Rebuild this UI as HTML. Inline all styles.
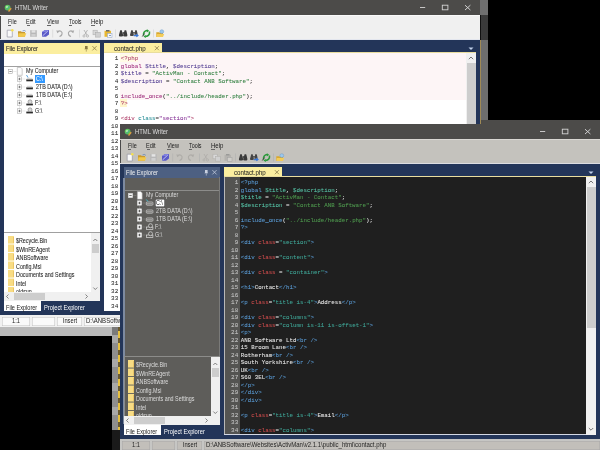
<!DOCTYPE html><html><head><meta charset="utf-8"><style>
html,body{margin:0;padding:0;}
body{width:600px;height:450px;background:#000;position:relative;overflow:hidden;}
.w{position:absolute;width:488px;height:336px;overflow:hidden;will-change:transform;}
.w div{position:absolute;}
.t{white-space:nowrap;}
u{text-decoration-thickness:0.45px;text-underline-offset:0.8px;}
</style></head><body>
<div class="w" style="left:0;top:0;"><div style="left:480px;top:0px;width:8px;height:15px;background:#6f6f6f;"></div><div style="left:480px;top:15px;width:8px;height:25px;background:#3a3a3a;"></div><div style="left:480px;top:15px;width:1px;height:25px;background:#111;"></div><div style="left:481px;top:40px;width:7px;height:296px;background:#6e6e6e;"></div><div style="left:480px;top:40px;width:1px;height:296px;background:#a08a55;"></div><div style="left:0px;top:0px;width:480px;height:14.5px;background:#4c4b49;"></div><div class="t" style="left:15.3px;top:1.0999999999999996px;line-height:13.0px;font-size:6.5px;color:#dedede;font-family:'Liberation Sans',sans-serif;transform:scaleX(0.9048) ;transform-origin:0 50%;">HTML Writer</div><svg style="position:absolute;left:4px;top:3.5px;" width="10" height="9" viewBox="0 0 10 9"><circle cx="3.6" cy="3.6" r="2.9" fill="#5bc45b"/><circle cx="3" cy="3" r="1.3" fill="#a8e8a0"/><path d="M2.2 5.6 L5.5 2.2" stroke="#3a8ac0" stroke-width="0.7"/><path d="M4.5 7.5 L7.2 4.2" stroke="#e0a040" stroke-width="1.4"/></svg><svg style="position:absolute;left:415px;top:0px;" width="60" height="15" viewBox="0 0 60 15"><path d="M5 7.5 H10.2" stroke="#d4d4d4" stroke-width="0.9"/><rect x="27.3" y="5.2" width="5.6" height="4.6" fill="none" stroke="#d4d4d4" stroke-width="0.9"/><path d="M50 5.2 L55.4 10 M55.4 5.2 L50 10" stroke="#d4d4d4" stroke-width="0.95"/></svg><div style="left:0px;top:14.5px;width:480px;height:25.5px;background:#f0f0f0;"></div><div class="t" style="left:7.8px;top:15.0px;line-height:13.0px;font-size:6.5px;color:#1a1a1a;font-family:'Liberation Sans',sans-serif;transform:scaleX(0.8396) ;transform-origin:0 50%;">File</div><div style="left:8.1px;top:24.6px;width:3.0px;height:0.5px;background:#666;"></div><div class="t" style="left:26.2px;top:15.0px;line-height:13.0px;font-size:6.5px;color:#1a1a1a;font-family:'Liberation Sans',sans-serif;transform:scaleX(0.857) ;transform-origin:0 50%;">Edit</div><div style="left:26.5px;top:24.6px;width:3.2px;height:0.5px;background:#666;"></div><div class="t" style="left:46.5px;top:15.0px;line-height:13.0px;font-size:6.5px;color:#1a1a1a;font-family:'Liberation Sans',sans-serif;transform:scaleX(0.8587) ;transform-origin:0 50%;">View</div><div style="left:46.8px;top:24.6px;width:3.8px;height:0.5px;background:#666;"></div><div class="t" style="left:68.5px;top:15.0px;line-height:13.0px;font-size:6.5px;color:#1a1a1a;font-family:'Liberation Sans',sans-serif;transform:scaleX(0.8233) ;transform-origin:0 50%;">Tools</div><div style="left:68.8px;top:24.6px;width:3.4px;height:0.5px;background:#666;"></div><div class="t" style="left:91px;top:15.0px;line-height:13.0px;font-size:6.5px;color:#1a1a1a;font-family:'Liberation Sans',sans-serif;transform:scaleX(0.927) ;transform-origin:0 50%;">Help</div><div style="left:91.3px;top:24.6px;width:4.0px;height:0.5px;background:#666;"></div><div style="left:0px;top:14.5px;width:0.8px;height:25.5px;background:#4a4a4a;"></div><div style="left:0px;top:14.5px;width:480px;height:1.0px;background:#fafafa;"></div><div style="left:0px;top:38.8px;width:480px;height:1.0px;background:#e3e6ee;"></div><svg style="position:absolute;left:0px;top:0px;" width="170" height="40" viewBox="0 0 170 40"><path d="M7.2 30.2 H11 L12.3 31.5 V37 H7.2 Z" fill="#fafafa" stroke="#8a8a9a" stroke-width="0.6"/><circle cx="12.3" cy="30.3" r="1.3" fill="#f5e050"/><path d="M18 31.2 H21 L21.8 32 H25 V36.7 H18 Z" fill="#c89a30"/><path d="M18.6 33.2 H26.3 L25 36.7 H18 Z" fill="#f2c84a"/><path d="M22.5 31 Q24.5 29.8 25.8 31.3" stroke="#4070b0" stroke-width="0.6" fill="none"/><rect x="30.2" y="30.2" width="6.6" height="6.6" fill="#b8b8b8"/><rect x="31.6" y="30.2" width="3.8" height="2.4" fill="#e4e4e4"/><rect x="31.4" y="34" width="4.2" height="2.8" fill="#d0d0d0"/><path d="M42 32 L45 30 H49 V34.5 L46 36.8 H42 Z" fill="#5a5ac8"/><path d="M42.5 36 L48 30.8" stroke="#d8d8f8" stroke-width="0.8"/><path d="M45 30 H49 L46 32 H42 Z" fill="#8080e0"/><rect x="52.5" y="29.5" width="0.6" height="8" fill="#d0d0d0"/><rect x="79" y="29.5" width="0.6" height="8" fill="#d0d0d0"/><rect x="115.3" y="29.5" width="0.6" height="8" fill="#d0d0d0"/><rect x="153" y="29.5" width="0.6" height="8" fill="#d0d0d0"/><path d="M57.5 31.5 Q60.5 30 62 32.5 Q62.5 35.5 59.5 36.5" stroke="#a8a8a8" stroke-width="1.1" fill="none"/><path d="M56.3 30.3 L57.3 33.2 L59.5 31.5 Z" fill="#a8a8a8"/><path d="M73 31.5 Q70 30 68.5 32.5 Q68 35.5 71 36.5" stroke="#a8a8a8" stroke-width="1.1" fill="none"/><path d="M74.2 30.3 L73.2 33.2 L71 31.5 Z" fill="#a8a8a8"/><path d="M84 30 L87 35 M87.5 30 L84.5 35" stroke="#a8a8a8" stroke-width="0.8"/><circle cx="84" cy="36" r="1.1" fill="none" stroke="#a8a8a8" stroke-width="0.7"/><circle cx="87.5" cy="36" r="1.1" fill="none" stroke="#a8a8a8" stroke-width="0.7"/><rect x="93" y="30.2" width="4.2" height="4.6" fill="#d8d8d8" stroke="#a8a8a8" stroke-width="0.5"/><rect x="95.5" y="32.3" width="4.8" height="4.8" fill="#d0d0d0" stroke="#a8a8a8" stroke-width="0.5"/><rect x="104.5" y="30.8" width="6.5" height="6" fill="#e8b830"/><rect x="106" y="30" width="3.5" height="1.5" fill="#6a6a6a"/><rect x="107.5" y="33.5" width="4.5" height="3.8" fill="#f8f8f8" stroke="#8aa0c8" stroke-width="0.5"/><path d="M109 35.5 H111" stroke="#3060b0" stroke-width="0.6"/><path d="M120.2 30.2 h1.6 l0.6 2.5 l0.8 2.6 q0 1.2 -1.6 1.2 h-1.6 q-1.2 0 -1.1 -1.2 Z" fill="#3a3a3a"/><path d="M124.6 30.2 h1.6 l0.7 2.6 l0.5 2.5 q0 1.2 -1.1 1.2 h-1.6 q-1.6 0 -1.6 -1.2 l0.8 -2.6 Z" fill="#3a3a3a"/><rect x="122.5" y="32.2" width="1.8" height="1.6" fill="#3a3a3a"/><path d="M131.2 30.2 h1.5 l0.5 2.4 l0.7 2.4 q0 1.1 -1.4 1.1 h-1.5 q-1.1 0 -1 -1.1 Z" fill="#444"/><path d="M135.2 30.2 h1.5 l0.6 2.4 l0.4 2.2 h-3.4 l0.6 -2.2 Z" fill="#444"/><rect x="133.2" y="32" width="1.6" height="1.5" fill="#444"/><path d="M133.8 35.6 H137.6 M136.4 34.3 L138 35.6 L136.4 36.9" stroke="#3a78d8" stroke-width="1.1" fill="none"/><path d="M143.5 35.5 Q143 31 147.5 30.6" stroke="#2a9a3a" stroke-width="1.5" fill="none"/><path d="M149.5 31.5 Q150 36 145.5 36.6" stroke="#2a9a3a" stroke-width="1.5" fill="none"/><path d="M146.8 29.2 L149.2 30.8 L146.8 32.4 Z" fill="#2a9a3a"/><path d="M145.8 35 L143.4 36.6 L145.8 38 Z" fill="#2a9a3a"/><path d="M142.3 36.5 L144.6 33.5" stroke="#3a3a3a" stroke-width="0.9"/><path d="M156.3 32.3 H159.3 L160 33 H163 V37 H156.3 Z" fill="#d8a830"/><path d="M156.8 34 H164.2 L163 37 H156.3 Z" fill="#f4cc58"/><circle cx="161.8" cy="31.6" r="1.9" fill="#9cc8ec" stroke="#5a90c8" stroke-width="0.4"/></svg><div style="left:0px;top:40px;width:480px;height:275px;background:#233559;"></div><div style="left:3.5px;top:43px;width:96.0px;height:10.6px;background:#fbee9f;"></div><div class="t" style="left:6px;top:42.1px;line-height:13.0px;font-size:6.5px;color:#2a2a2a;font-family:'Liberation Sans',sans-serif;-webkit-text-stroke:0.12px #2a2a2a;transform:scaleX(0.8769) ;transform-origin:0 50%;">File Explorer</div><svg style="position:absolute;left:80px;top:43px;" width="20" height="10" viewBox="0 0 20 10"><path d="M5 3 H7.6 V5.5 L8.3 6.3 H4.3 L5 5.5 Z" fill="#8a7a40"/><path d="M6.3 6.3 V8.6" stroke="#8a7a40" stroke-width="0.6"/><path d="M12.4 3.1 L16.6 7.4 M16.6 3.1 L12.4 7.4" stroke="#8a7a40" stroke-width="0.75"/></svg><div style="left:3.5px;top:53.6px;width:96.0px;height:246.9px;background:#ffffff;"></div><div style="left:3.5px;top:65.5px;width:96.0px;height:0.8px;background:#a0a0a0;"></div><svg style="position:absolute;left:0px;top:0px;" width="50" height="120" viewBox="0 0 50 120"><rect x="8.3" y="69.3" width="4.4" height="4.4" fill="#ffffff" stroke="#9a9a9a" stroke-width="0.5"/><path d="M9.3 71.5 H11.7" stroke="#4a4a4a" stroke-width="0.6"/><path d="M12.7 71.5 H16.5" stroke="#a8a8a8" stroke-width="0.4" stroke-dasharray="0.6 0.6"/><path d="M17.3 67.5 H20.8 L22.2 68.9 V75.3 H17.3 Z" fill="#fcfcfc" stroke="#9a9a9a" stroke-width="0.5"/><path d="M19.5 76 V111" stroke="#a8a8a8" stroke-width="0.4" stroke-dasharray="0.6 0.6"/><rect x="17.3" y="76.8" width="4.4" height="4.4" fill="#ffffff" stroke="#9a9a9a" stroke-width="0.5"/><path d="M18.3 79 H20.7 M19.5 77.8 V80.2" stroke="#4a4a4a" stroke-width="0.6"/><path d="M21.7 79 H25.5" stroke="#a8a8a8" stroke-width="0.4" stroke-dasharray="0.6 0.6"/><rect x="26.3" y="79.3" width="6.6" height="2" fill="#2a2a2a"/><rect x="26.8" y="77.8" width="5.6" height="1.5" fill="#d8d8d8"/><path d="M26.5 75 L28 77.5" stroke="#2a8ad8" stroke-width="0.8"/><rect x="17.3" y="84.8" width="4.4" height="4.4" fill="#ffffff" stroke="#9a9a9a" stroke-width="0.5"/><path d="M18.3 87 H20.7 M19.5 85.8 V88.2" stroke="#4a4a4a" stroke-width="0.6"/><path d="M21.7 87 H25.5" stroke="#a8a8a8" stroke-width="0.4" stroke-dasharray="0.6 0.6"/><rect x="26.3" y="87.3" width="6.6" height="2" fill="#2a2a2a"/><rect x="26.8" y="85.8" width="5.6" height="1.5" fill="#d8d8d8"/><rect x="17.3" y="92.8" width="4.4" height="4.4" fill="#ffffff" stroke="#9a9a9a" stroke-width="0.5"/><path d="M18.3 95 H20.7 M19.5 93.8 V96.2" stroke="#4a4a4a" stroke-width="0.6"/><path d="M21.7 95 H25.5" stroke="#a8a8a8" stroke-width="0.4" stroke-dasharray="0.6 0.6"/><rect x="26.3" y="95.3" width="6.6" height="2" fill="#2a2a2a"/><rect x="26.8" y="93.8" width="5.6" height="1.5" fill="#d8d8d8"/><rect x="17.3" y="100.8" width="4.4" height="4.4" fill="#ffffff" stroke="#9a9a9a" stroke-width="0.5"/><path d="M18.3 103 H20.7 M19.5 101.8 V104.2" stroke="#4a4a4a" stroke-width="0.6"/><path d="M21.7 103 H25.5" stroke="#a8a8a8" stroke-width="0.4" stroke-dasharray="0.6 0.6"/><rect x="26.3" y="103.6" width="6.6" height="1.8" fill="#2a2a2a"/><circle cx="30" cy="101.8" r="2" fill="#d8d8d8" stroke="#6a6a6a" stroke-width="0.5"/><rect x="17.3" y="108.8" width="4.4" height="4.4" fill="#ffffff" stroke="#9a9a9a" stroke-width="0.5"/><path d="M18.3 111 H20.7 M19.5 109.8 V112.2" stroke="#4a4a4a" stroke-width="0.6"/><path d="M21.7 111 H25.5" stroke="#a8a8a8" stroke-width="0.4" stroke-dasharray="0.6 0.6"/><rect x="26.3" y="111.6" width="6.6" height="1.8" fill="#2a2a2a"/><circle cx="30" cy="109.8" r="2" fill="#d8d8d8" stroke="#6a6a6a" stroke-width="0.5"/></svg><div style="left:34.5px;top:75.2px;width:10.0px;height:8.0px;background:#3399ff;"></div><div class="t" style="left:26px;top:64.89999999999999px;line-height:12.8px;font-size:6.4px;color:#1e1e1e;font-family:'Liberation Sans',sans-serif;-webkit-text-stroke:0.06px #1e1e1e;transform:scaleX(0.84) ;transform-origin:0 50%;">My Computer</div><div class="t" style="left:35.7px;top:72.8px;line-height:12.8px;font-size:6.4px;color:#ffffff;font-family:'Liberation Sans',sans-serif;-webkit-text-stroke:0.06px #ffffff;transform:scaleX(0.84) ;transform-origin:0 50%;">C:\</div><div class="t" style="left:36px;top:80.8px;line-height:12.8px;font-size:6.4px;color:#1e1e1e;font-family:'Liberation Sans',sans-serif;-webkit-text-stroke:0.06px #1e1e1e;transform:scaleX(0.84) ;transform-origin:0 50%;">2TB DATA (D:\)</div><div class="t" style="left:36px;top:88.8px;line-height:12.8px;font-size:6.4px;color:#1e1e1e;font-family:'Liberation Sans',sans-serif;-webkit-text-stroke:0.06px #1e1e1e;transform:scaleX(0.84) ;transform-origin:0 50%;">1TB DATA (E:\)</div><div class="t" style="left:35px;top:96.8px;line-height:12.8px;font-size:6.4px;color:#1e1e1e;font-family:'Liberation Sans',sans-serif;-webkit-text-stroke:0.06px #1e1e1e;transform:scaleX(0.84) ;transform-origin:0 50%;">F:\</div><div class="t" style="left:35px;top:104.8px;line-height:12.8px;font-size:6.4px;color:#1e1e1e;font-family:'Liberation Sans',sans-serif;-webkit-text-stroke:0.06px #1e1e1e;transform:scaleX(0.84) ;transform-origin:0 50%;">G:\</div><div style="left:3.5px;top:232px;width:96.0px;height:1.3px;background:#a0a0a0;"></div><svg style="position:absolute;left:8px;top:236.4px;" width="6" height="58" viewBox="0 0 6 58"><rect x="0" y="0.0" width="6" height="7.6" fill="#f8dc84"/><rect x="5.2" y="1.0" width="0.8" height="6" fill="#e8c060"/><rect x="0" y="8.5" width="6" height="7.6" fill="#f8dc84"/><rect x="5.2" y="9.5" width="0.8" height="6" fill="#e8c060"/><rect x="0" y="17.0" width="6" height="7.6" fill="#f8dc84"/><rect x="5.2" y="18.0" width="0.8" height="6" fill="#e8c060"/><rect x="0" y="25.5" width="6" height="7.6" fill="#f8dc84"/><rect x="5.2" y="26.5" width="0.8" height="6" fill="#e8c060"/><rect x="0" y="34.0" width="6" height="7.6" fill="#f8dc84"/><rect x="5.2" y="35.0" width="0.8" height="6" fill="#e8c060"/><rect x="0" y="42.5" width="6" height="7.6" fill="#f8dc84"/><rect x="5.2" y="43.5" width="0.8" height="6" fill="#e8c060"/><rect x="0" y="51.0" width="6" height="7.6" fill="#f8dc84"/><rect x="5.2" y="52.0" width="0.8" height="6" fill="#e8c060"/></svg><div class="t" style="left:16.2px;top:235.0px;line-height:12.8px;font-size:6.4px;color:#1e1e1e;font-family:'Liberation Sans',sans-serif;-webkit-text-stroke:0.06px #1e1e1e;transform:scaleX(0.84) ;transform-origin:0 50%;">$Recycle.Bin</div><div class="t" style="left:16.2px;top:243.5px;line-height:12.8px;font-size:6.4px;color:#1e1e1e;font-family:'Liberation Sans',sans-serif;-webkit-text-stroke:0.06px #1e1e1e;transform:scaleX(0.84) ;transform-origin:0 50%;">$WinREAgent</div><div class="t" style="left:16.2px;top:252.00000000000003px;line-height:12.8px;font-size:6.4px;color:#1e1e1e;font-family:'Liberation Sans',sans-serif;-webkit-text-stroke:0.06px #1e1e1e;transform:scaleX(0.84) ;transform-origin:0 50%;">ANBSoftware</div><div class="t" style="left:16.2px;top:260.50000000000006px;line-height:12.8px;font-size:6.4px;color:#1e1e1e;font-family:'Liberation Sans',sans-serif;-webkit-text-stroke:0.06px #1e1e1e;transform:scaleX(0.84) ;transform-origin:0 50%;">Config.Msi</div><div class="t" style="left:16.2px;top:269.00000000000006px;line-height:12.8px;font-size:6.4px;color:#1e1e1e;font-family:'Liberation Sans',sans-serif;-webkit-text-stroke:0.06px #1e1e1e;transform:scaleX(0.84) ;transform-origin:0 50%;">Documents and Settings</div><div class="t" style="left:16.2px;top:277.50000000000006px;line-height:12.8px;font-size:6.4px;color:#1e1e1e;font-family:'Liberation Sans',sans-serif;-webkit-text-stroke:0.06px #1e1e1e;transform:scaleX(0.84) ;transform-origin:0 50%;">Intel</div><div class="t" style="left:16.2px;top:286.00000000000006px;line-height:12.8px;font-size:6.4px;color:#1e1e1e;font-family:'Liberation Sans',sans-serif;-webkit-text-stroke:0.06px #1e1e1e;transform:scaleX(0.84) ;transform-origin:0 50%;">oldsun</div><div style="left:3.5px;top:292px;width:96.0px;height:8.5px;background:#f0f0f0;"></div><div style="left:91px;top:233.3px;width:8.5px;height:58.7px;background:#f0f0f0;"></div><div style="left:91.5px;top:244px;width:7.0px;height:9px;background:#cdcdcd;"></div><svg style="position:absolute;left:91px;top:233px;" width="9" height="67" viewBox="0 0 9 67"><path d="M2.3 8 L4.3 6 L6.3 8" stroke="#555" stroke-width="0.7" fill="none"/><path d="M2.3 54.5 L4.3 56.5 L6.3 54.5" stroke="#555" stroke-width="0.7" fill="none"/></svg><svg style="position:absolute;left:0px;top:290px;" width="100" height="12" viewBox="0 0 100 12"><path d="M8.5 4.5 L6.5 6.5 L8.5 8.5" stroke="#555" stroke-width="0.7" fill="none"/><path d="M85.5 4.5 L87.5 6.5 L85.5 8.5" stroke="#555" stroke-width="0.7" fill="none"/></svg><div style="left:14px;top:293px;width:31px;height:6.5px;background:#cdcdcd;"></div><div style="left:3.5px;top:300.5px;width:37.5px;height:10.5px;background:#ffffff;"></div><div class="t" style="left:6.3px;top:300.8px;line-height:13.0px;font-size:6.5px;color:#222;font-family:'Liberation Sans',sans-serif;transform:scaleX(0.855) ;transform-origin:0 50%;">File Explorer</div><div class="t" style="left:44.2px;top:300.8px;line-height:13.0px;font-size:6.5px;color:#ffffff;font-family:'Liberation Sans',sans-serif;transform:scaleX(0.8823) ;transform-origin:0 50%;">Project Explorer</div><div style="left:103.5px;top:43px;width:58.5px;height:10px;background:#fbee9f;"></div><div class="t" style="left:113.8px;top:42.1px;line-height:13.0px;font-size:6.5px;color:#222;font-family:'Liberation Sans',sans-serif;-webkit-text-stroke:0.04px #222;transform:scaleX(0.943) ;transform-origin:0 50%;">contact.php</div><svg style="position:absolute;left:150px;top:43px;" width="12" height="10" viewBox="0 0 12 10"><path d="M4.9 3.2 L8.9 7.2 M8.9 3.2 L4.9 7.2" stroke="#7a6a40" stroke-width="0.7"/></svg><svg style="position:absolute;left:466px;top:45px;" width="10" height="7" viewBox="0 0 10 7"><path d="M2.5 2.5 H7.5 L5 5 Z" fill="#c0d0ea"/></svg><div style="left:104px;top:52.2px;width:372px;height:1.0px;background:#e9dd9e;"></div><div style="left:104px;top:53.2px;width:362px;height:257.8px;background:#ffffff;"></div><div style="left:104px;top:53.2px;width:15.5px;height:257.8px;background:#ffffff;"></div><div style="left:466px;top:53.2px;width:10px;height:257.8px;background:#f0f0f0;"></div><div style="left:466.5px;top:63px;width:9.0px;height:141px;background:#cdcdcd;"></div><svg style="position:absolute;left:466px;top:300px;" width="10" height="10" viewBox="0 0 10 10"><path d="M2.8 4 L5 6.2 L7.2 4" stroke="#555" stroke-width="0.8" fill="none"/></svg><svg style="position:absolute;left:466px;top:53px;" width="10" height="10" viewBox="0 0 10 10"><path d="M2.8 6.2 L5 4 L7.2 6.2" stroke="#555" stroke-width="0.8" fill="none"/></svg><div style="left:119.5px;top:53.2px;width:346.5px;height:46.4px;background:#fdf5f6;"></div><div style="left:119.5px;top:54px;width:18.5px;height:7.5px;background:#fffbe6;"></div><div style="left:119.5px;top:99px;width:7.5px;height:7.5px;background:#fff6cc;"></div><div class="t" style="left:118.3px;top:53.0px;line-height:12px;font-size:6px;color:#2a2a2a;font-family:'Liberation Mono',monospace;-webkit-text-stroke:0.04px #2a2a2a;transform:translateX(-100%) ;transform-origin:0 50%;">1</div><div class="t" style="left:120.8px;top:53.2px;line-height:11.6px;font-size:5.8px;color:#222;font-family:'Liberation Mono',monospace;white-space:pre;"><span style="color:#b0406a;-webkit-text-stroke:0.06px #b0406a">&lt;?php</span></div><div class="t" style="left:118.3px;top:60.5px;line-height:12px;font-size:6px;color:#2a2a2a;font-family:'Liberation Mono',monospace;-webkit-text-stroke:0.04px #2a2a2a;transform:translateX(-100%) ;transform-origin:0 50%;">2</div><div class="t" style="left:120.8px;top:60.7px;line-height:11.6px;font-size:5.8px;color:#222;font-family:'Liberation Mono',monospace;white-space:pre;"><span style="color:#a0307e;-webkit-text-stroke:0.06px #a0307e">global</span><span style="color:#222;-webkit-text-stroke:0.06px #222"> </span><span style="color:#4f3a90;-webkit-text-stroke:0.06px #4f3a90">$title</span><span style="color:#222;-webkit-text-stroke:0.06px #222">, </span><span style="color:#4f3a90;-webkit-text-stroke:0.06px #4f3a90">$description</span><span style="color:#222;-webkit-text-stroke:0.06px #222">;</span></div><div class="t" style="left:118.3px;top:68.0px;line-height:12px;font-size:6px;color:#2a2a2a;font-family:'Liberation Mono',monospace;-webkit-text-stroke:0.04px #2a2a2a;transform:translateX(-100%) ;transform-origin:0 50%;">3</div><div class="t" style="left:120.8px;top:68.2px;line-height:11.6px;font-size:5.8px;color:#222;font-family:'Liberation Mono',monospace;white-space:pre;"><span style="color:#4f3a90;-webkit-text-stroke:0.06px #4f3a90">$title</span><span style="color:#222;-webkit-text-stroke:0.06px #222"> = </span><span style="color:#2f7f3f;-webkit-text-stroke:0.06px #2f7f3f">&quot;ActivMan - Contact&quot;</span><span style="color:#222;-webkit-text-stroke:0.06px #222">;</span></div><div class="t" style="left:118.3px;top:75.5px;line-height:12px;font-size:6px;color:#2a2a2a;font-family:'Liberation Mono',monospace;-webkit-text-stroke:0.04px #2a2a2a;transform:translateX(-100%) ;transform-origin:0 50%;">4</div><div class="t" style="left:120.8px;top:75.7px;line-height:11.6px;font-size:5.8px;color:#222;font-family:'Liberation Mono',monospace;white-space:pre;"><span style="color:#4f3a90;-webkit-text-stroke:0.06px #4f3a90">$description</span><span style="color:#222;-webkit-text-stroke:0.06px #222"> = </span><span style="color:#2f7f3f;-webkit-text-stroke:0.06px #2f7f3f">&quot;Contact ANB Software&quot;</span><span style="color:#222;-webkit-text-stroke:0.06px #222">;</span></div><div class="t" style="left:118.3px;top:83.0px;line-height:12px;font-size:6px;color:#2a2a2a;font-family:'Liberation Mono',monospace;-webkit-text-stroke:0.04px #2a2a2a;transform:translateX(-100%) ;transform-origin:0 50%;">5</div><div class="t" style="left:120.8px;top:83.2px;line-height:11.6px;font-size:5.8px;color:#222;font-family:'Liberation Mono',monospace;white-space:pre;"></div><div class="t" style="left:118.3px;top:90.5px;line-height:12px;font-size:6px;color:#2a2a2a;font-family:'Liberation Mono',monospace;-webkit-text-stroke:0.04px #2a2a2a;transform:translateX(-100%) ;transform-origin:0 50%;">6</div><div class="t" style="left:120.8px;top:90.7px;line-height:11.6px;font-size:5.8px;color:#222;font-family:'Liberation Mono',monospace;white-space:pre;"><span style="color:#a0307e;-webkit-text-stroke:0.06px #a0307e">include_once</span><span style="color:#222;-webkit-text-stroke:0.06px #222">(</span><span style="color:#2f7f3f;-webkit-text-stroke:0.06px #2f7f3f">&quot;../include/header.php&quot;</span><span style="color:#222;-webkit-text-stroke:0.06px #222">);</span></div><div class="t" style="left:118.3px;top:98.0px;line-height:12px;font-size:6px;color:#2a2a2a;font-family:'Liberation Mono',monospace;-webkit-text-stroke:0.04px #2a2a2a;transform:translateX(-100%) ;transform-origin:0 50%;">7</div><div class="t" style="left:120.8px;top:98.2px;line-height:11.6px;font-size:5.8px;color:#222;font-family:'Liberation Mono',monospace;white-space:pre;"><span style="color:#b0406a;-webkit-text-stroke:0.06px #b0406a">?&gt;</span></div><div class="t" style="left:118.3px;top:105.5px;line-height:12px;font-size:6px;color:#2a2a2a;font-family:'Liberation Mono',monospace;-webkit-text-stroke:0.04px #2a2a2a;transform:translateX(-100%) ;transform-origin:0 50%;">8</div><div class="t" style="left:120.8px;top:105.7px;line-height:11.6px;font-size:5.8px;color:#222;font-family:'Liberation Mono',monospace;white-space:pre;"></div><div class="t" style="left:118.3px;top:113.0px;line-height:12px;font-size:6px;color:#2a2a2a;font-family:'Liberation Mono',monospace;-webkit-text-stroke:0.04px #2a2a2a;transform:translateX(-100%) ;transform-origin:0 50%;">9</div><div class="t" style="left:120.8px;top:113.2px;line-height:11.6px;font-size:5.8px;color:#222;font-family:'Liberation Mono',monospace;white-space:pre;"><span style="color:#b0406a;-webkit-text-stroke:0.06px #b0406a">&lt;div</span><span style="color:#222;-webkit-text-stroke:0.06px #222"> </span><span style="color:#2a9098;-webkit-text-stroke:0.06px #2a9098">class</span><span style="color:#222;-webkit-text-stroke:0.06px #222">=</span><span style="color:#8a3a9a;-webkit-text-stroke:0.06px #8a3a9a">&quot;section&quot;</span><span style="color:#b0406a;-webkit-text-stroke:0.06px #b0406a">&gt;</span></div><div class="t" style="left:118.3px;top:120.5px;line-height:12px;font-size:6px;color:#2a2a2a;font-family:'Liberation Mono',monospace;-webkit-text-stroke:0.04px #2a2a2a;transform:translateX(-100%) ;transform-origin:0 50%;">10</div><div class="t" style="left:120.8px;top:120.7px;line-height:11.6px;font-size:5.8px;color:#222;font-family:'Liberation Mono',monospace;white-space:pre;"></div><div class="t" style="left:118.3px;top:128.0px;line-height:12px;font-size:6px;color:#2a2a2a;font-family:'Liberation Mono',monospace;-webkit-text-stroke:0.04px #2a2a2a;transform:translateX(-100%) ;transform-origin:0 50%;">11</div><div class="t" style="left:120.8px;top:128.2px;line-height:11.6px;font-size:5.8px;color:#222;font-family:'Liberation Mono',monospace;white-space:pre;"><span style="color:#b0406a;-webkit-text-stroke:0.06px #b0406a">&lt;div</span><span style="color:#222;-webkit-text-stroke:0.06px #222"> </span><span style="color:#2a9098;-webkit-text-stroke:0.06px #2a9098">class</span><span style="color:#222;-webkit-text-stroke:0.06px #222">=</span><span style="color:#8a3a9a;-webkit-text-stroke:0.06px #8a3a9a">&quot;content&quot;</span><span style="color:#b0406a;-webkit-text-stroke:0.06px #b0406a">&gt;</span></div><div class="t" style="left:118.3px;top:135.5px;line-height:12px;font-size:6px;color:#2a2a2a;font-family:'Liberation Mono',monospace;-webkit-text-stroke:0.04px #2a2a2a;transform:translateX(-100%) ;transform-origin:0 50%;">12</div><div class="t" style="left:120.8px;top:135.7px;line-height:11.6px;font-size:5.8px;color:#222;font-family:'Liberation Mono',monospace;white-space:pre;"></div><div class="t" style="left:118.3px;top:143.0px;line-height:12px;font-size:6px;color:#2a2a2a;font-family:'Liberation Mono',monospace;-webkit-text-stroke:0.04px #2a2a2a;transform:translateX(-100%) ;transform-origin:0 50%;">13</div><div class="t" style="left:120.8px;top:143.2px;line-height:11.6px;font-size:5.8px;color:#222;font-family:'Liberation Mono',monospace;white-space:pre;"><span style="color:#b0406a;-webkit-text-stroke:0.06px #b0406a">&lt;div</span><span style="color:#222;-webkit-text-stroke:0.06px #222"> </span><span style="color:#2a9098;-webkit-text-stroke:0.06px #2a9098">class</span><span style="color:#222;-webkit-text-stroke:0.06px #222"> = </span><span style="color:#8a3a9a;-webkit-text-stroke:0.06px #8a3a9a">&quot;container&quot;</span><span style="color:#b0406a;-webkit-text-stroke:0.06px #b0406a">&gt;</span></div><div class="t" style="left:118.3px;top:150.5px;line-height:12px;font-size:6px;color:#2a2a2a;font-family:'Liberation Mono',monospace;-webkit-text-stroke:0.04px #2a2a2a;transform:translateX(-100%) ;transform-origin:0 50%;">14</div><div class="t" style="left:120.8px;top:150.7px;line-height:11.6px;font-size:5.8px;color:#222;font-family:'Liberation Mono',monospace;white-space:pre;"></div><div class="t" style="left:118.3px;top:158.0px;line-height:12px;font-size:6px;color:#2a2a2a;font-family:'Liberation Mono',monospace;-webkit-text-stroke:0.04px #2a2a2a;transform:translateX(-100%) ;transform-origin:0 50%;">15</div><div class="t" style="left:120.8px;top:158.2px;line-height:11.6px;font-size:5.8px;color:#222;font-family:'Liberation Mono',monospace;white-space:pre;"><span style="color:#b0406a;-webkit-text-stroke:0.06px #b0406a">&lt;h1&gt;</span><span style="color:#222;-webkit-text-stroke:0.06px #222">Contact</span><span style="color:#b0406a;-webkit-text-stroke:0.06px #b0406a">&lt;/h1&gt;</span></div><div class="t" style="left:118.3px;top:165.5px;line-height:12px;font-size:6px;color:#2a2a2a;font-family:'Liberation Mono',monospace;-webkit-text-stroke:0.04px #2a2a2a;transform:translateX(-100%) ;transform-origin:0 50%;">16</div><div class="t" style="left:120.8px;top:165.7px;line-height:11.6px;font-size:5.8px;color:#222;font-family:'Liberation Mono',monospace;white-space:pre;"></div><div class="t" style="left:118.3px;top:173.0px;line-height:12px;font-size:6px;color:#2a2a2a;font-family:'Liberation Mono',monospace;-webkit-text-stroke:0.04px #2a2a2a;transform:translateX(-100%) ;transform-origin:0 50%;">17</div><div class="t" style="left:120.8px;top:173.2px;line-height:11.6px;font-size:5.8px;color:#222;font-family:'Liberation Mono',monospace;white-space:pre;"><span style="color:#b0406a;-webkit-text-stroke:0.06px #b0406a">&lt;p</span><span style="color:#222;-webkit-text-stroke:0.06px #222"> </span><span style="color:#2a9098;-webkit-text-stroke:0.06px #2a9098">class</span><span style="color:#222;-webkit-text-stroke:0.06px #222">=</span><span style="color:#8a3a9a;-webkit-text-stroke:0.06px #8a3a9a">&quot;title is-4&quot;</span><span style="color:#b0406a;-webkit-text-stroke:0.06px #b0406a">&gt;</span><span style="color:#222;-webkit-text-stroke:0.06px #222">Address</span><span style="color:#b0406a;-webkit-text-stroke:0.06px #b0406a">&lt;/p&gt;</span></div><div class="t" style="left:118.3px;top:180.5px;line-height:12px;font-size:6px;color:#2a2a2a;font-family:'Liberation Mono',monospace;-webkit-text-stroke:0.04px #2a2a2a;transform:translateX(-100%) ;transform-origin:0 50%;">18</div><div class="t" style="left:120.8px;top:180.7px;line-height:11.6px;font-size:5.8px;color:#222;font-family:'Liberation Mono',monospace;white-space:pre;"></div><div class="t" style="left:118.3px;top:188.0px;line-height:12px;font-size:6px;color:#2a2a2a;font-family:'Liberation Mono',monospace;-webkit-text-stroke:0.04px #2a2a2a;transform:translateX(-100%) ;transform-origin:0 50%;">19</div><div class="t" style="left:120.8px;top:188.2px;line-height:11.6px;font-size:5.8px;color:#222;font-family:'Liberation Mono',monospace;white-space:pre;"><span style="color:#b0406a;-webkit-text-stroke:0.06px #b0406a">&lt;div</span><span style="color:#222;-webkit-text-stroke:0.06px #222"> </span><span style="color:#2a9098;-webkit-text-stroke:0.06px #2a9098">class</span><span style="color:#222;-webkit-text-stroke:0.06px #222">=</span><span style="color:#8a3a9a;-webkit-text-stroke:0.06px #8a3a9a">&quot;columns&quot;</span><span style="color:#b0406a;-webkit-text-stroke:0.06px #b0406a">&gt;</span></div><div class="t" style="left:118.3px;top:195.5px;line-height:12px;font-size:6px;color:#2a2a2a;font-family:'Liberation Mono',monospace;-webkit-text-stroke:0.04px #2a2a2a;transform:translateX(-100%) ;transform-origin:0 50%;">20</div><div class="t" style="left:120.8px;top:195.7px;line-height:11.6px;font-size:5.8px;color:#222;font-family:'Liberation Mono',monospace;white-space:pre;"><span style="color:#b0406a;-webkit-text-stroke:0.06px #b0406a">&lt;div</span><span style="color:#222;-webkit-text-stroke:0.06px #222"> </span><span style="color:#2a9098;-webkit-text-stroke:0.06px #2a9098">class</span><span style="color:#222;-webkit-text-stroke:0.06px #222">=</span><span style="color:#8a3a9a;-webkit-text-stroke:0.06px #8a3a9a">&quot;column is-11 is-offset-1&quot;</span><span style="color:#b0406a;-webkit-text-stroke:0.06px #b0406a">&gt;</span></div><div class="t" style="left:118.3px;top:203.0px;line-height:12px;font-size:6px;color:#2a2a2a;font-family:'Liberation Mono',monospace;-webkit-text-stroke:0.04px #2a2a2a;transform:translateX(-100%) ;transform-origin:0 50%;">21</div><div class="t" style="left:120.8px;top:203.2px;line-height:11.6px;font-size:5.8px;color:#222;font-family:'Liberation Mono',monospace;white-space:pre;"><span style="color:#b0406a;-webkit-text-stroke:0.06px #b0406a">&lt;p&gt;</span></div><div class="t" style="left:118.3px;top:210.5px;line-height:12px;font-size:6px;color:#2a2a2a;font-family:'Liberation Mono',monospace;-webkit-text-stroke:0.04px #2a2a2a;transform:translateX(-100%) ;transform-origin:0 50%;">22</div><div class="t" style="left:120.8px;top:210.7px;line-height:11.6px;font-size:5.8px;color:#222;font-family:'Liberation Mono',monospace;white-space:pre;"><span style="color:#222;-webkit-text-stroke:0.06px #222">ANB Software Ltd</span><span style="color:#b0406a;-webkit-text-stroke:0.06px #b0406a">&lt;br /&gt;</span></div><div class="t" style="left:118.3px;top:218.0px;line-height:12px;font-size:6px;color:#2a2a2a;font-family:'Liberation Mono',monospace;-webkit-text-stroke:0.04px #2a2a2a;transform:translateX(-100%) ;transform-origin:0 50%;">23</div><div class="t" style="left:120.8px;top:218.2px;line-height:11.6px;font-size:5.8px;color:#222;font-family:'Liberation Mono',monospace;white-space:pre;"><span style="color:#222;-webkit-text-stroke:0.06px #222">15 Broom Lane</span><span style="color:#b0406a;-webkit-text-stroke:0.06px #b0406a">&lt;br /&gt;</span></div><div class="t" style="left:118.3px;top:225.5px;line-height:12px;font-size:6px;color:#2a2a2a;font-family:'Liberation Mono',monospace;-webkit-text-stroke:0.04px #2a2a2a;transform:translateX(-100%) ;transform-origin:0 50%;">24</div><div class="t" style="left:120.8px;top:225.7px;line-height:11.6px;font-size:5.8px;color:#222;font-family:'Liberation Mono',monospace;white-space:pre;"><span style="color:#222;-webkit-text-stroke:0.06px #222">Rotherham</span><span style="color:#b0406a;-webkit-text-stroke:0.06px #b0406a">&lt;br /&gt;</span></div><div class="t" style="left:118.3px;top:233.0px;line-height:12px;font-size:6px;color:#2a2a2a;font-family:'Liberation Mono',monospace;-webkit-text-stroke:0.04px #2a2a2a;transform:translateX(-100%) ;transform-origin:0 50%;">25</div><div class="t" style="left:120.8px;top:233.2px;line-height:11.6px;font-size:5.8px;color:#222;font-family:'Liberation Mono',monospace;white-space:pre;"><span style="color:#222;-webkit-text-stroke:0.06px #222">South Yorkshire</span><span style="color:#b0406a;-webkit-text-stroke:0.06px #b0406a">&lt;br /&gt;</span></div><div class="t" style="left:118.3px;top:240.5px;line-height:12px;font-size:6px;color:#2a2a2a;font-family:'Liberation Mono',monospace;-webkit-text-stroke:0.04px #2a2a2a;transform:translateX(-100%) ;transform-origin:0 50%;">26</div><div class="t" style="left:120.8px;top:240.7px;line-height:11.6px;font-size:5.8px;color:#222;font-family:'Liberation Mono',monospace;white-space:pre;"><span style="color:#222;-webkit-text-stroke:0.06px #222">UK</span><span style="color:#b0406a;-webkit-text-stroke:0.06px #b0406a">&lt;br /&gt;</span></div><div class="t" style="left:118.3px;top:248.0px;line-height:12px;font-size:6px;color:#2a2a2a;font-family:'Liberation Mono',monospace;-webkit-text-stroke:0.04px #2a2a2a;transform:translateX(-100%) ;transform-origin:0 50%;">27</div><div class="t" style="left:120.8px;top:248.2px;line-height:11.6px;font-size:5.8px;color:#222;font-family:'Liberation Mono',monospace;white-space:pre;"><span style="color:#222;-webkit-text-stroke:0.06px #222">S60 3EL</span><span style="color:#b0406a;-webkit-text-stroke:0.06px #b0406a">&lt;br /&gt;</span></div><div class="t" style="left:118.3px;top:255.5px;line-height:12px;font-size:6px;color:#2a2a2a;font-family:'Liberation Mono',monospace;-webkit-text-stroke:0.04px #2a2a2a;transform:translateX(-100%) ;transform-origin:0 50%;">28</div><div class="t" style="left:120.8px;top:255.7px;line-height:11.6px;font-size:5.8px;color:#222;font-family:'Liberation Mono',monospace;white-space:pre;"><span style="color:#b0406a;-webkit-text-stroke:0.06px #b0406a">&lt;/p&gt;</span></div><div class="t" style="left:118.3px;top:263.0px;line-height:12px;font-size:6px;color:#2a2a2a;font-family:'Liberation Mono',monospace;-webkit-text-stroke:0.04px #2a2a2a;transform:translateX(-100%) ;transform-origin:0 50%;">29</div><div class="t" style="left:120.8px;top:263.2px;line-height:11.6px;font-size:5.8px;color:#222;font-family:'Liberation Mono',monospace;white-space:pre;"><span style="color:#b0406a;-webkit-text-stroke:0.06px #b0406a">&lt;/div&gt;</span></div><div class="t" style="left:118.3px;top:270.5px;line-height:12px;font-size:6px;color:#2a2a2a;font-family:'Liberation Mono',monospace;-webkit-text-stroke:0.04px #2a2a2a;transform:translateX(-100%) ;transform-origin:0 50%;">30</div><div class="t" style="left:120.8px;top:270.7px;line-height:11.6px;font-size:5.8px;color:#222;font-family:'Liberation Mono',monospace;white-space:pre;"><span style="color:#b0406a;-webkit-text-stroke:0.06px #b0406a">&lt;/div&gt;</span></div><div class="t" style="left:118.3px;top:278.0px;line-height:12px;font-size:6px;color:#2a2a2a;font-family:'Liberation Mono',monospace;-webkit-text-stroke:0.04px #2a2a2a;transform:translateX(-100%) ;transform-origin:0 50%;">31</div><div class="t" style="left:120.8px;top:278.2px;line-height:11.6px;font-size:5.8px;color:#222;font-family:'Liberation Mono',monospace;white-space:pre;"></div><div class="t" style="left:118.3px;top:285.5px;line-height:12px;font-size:6px;color:#2a2a2a;font-family:'Liberation Mono',monospace;-webkit-text-stroke:0.04px #2a2a2a;transform:translateX(-100%) ;transform-origin:0 50%;">32</div><div class="t" style="left:120.8px;top:285.7px;line-height:11.6px;font-size:5.8px;color:#222;font-family:'Liberation Mono',monospace;white-space:pre;"><span style="color:#b0406a;-webkit-text-stroke:0.06px #b0406a">&lt;p</span><span style="color:#222;-webkit-text-stroke:0.06px #222"> </span><span style="color:#2a9098;-webkit-text-stroke:0.06px #2a9098">class</span><span style="color:#222;-webkit-text-stroke:0.06px #222">=</span><span style="color:#8a3a9a;-webkit-text-stroke:0.06px #8a3a9a">&quot;title is-4&quot;</span><span style="color:#b0406a;-webkit-text-stroke:0.06px #b0406a">&gt;</span><span style="color:#222;-webkit-text-stroke:0.06px #222">Email</span><span style="color:#b0406a;-webkit-text-stroke:0.06px #b0406a">&lt;/p&gt;</span></div><div class="t" style="left:118.3px;top:293.0px;line-height:12px;font-size:6px;color:#2a2a2a;font-family:'Liberation Mono',monospace;-webkit-text-stroke:0.04px #2a2a2a;transform:translateX(-100%) ;transform-origin:0 50%;">33</div><div class="t" style="left:120.8px;top:293.2px;line-height:11.6px;font-size:5.8px;color:#222;font-family:'Liberation Mono',monospace;white-space:pre;"></div><div class="t" style="left:118.3px;top:300.5px;line-height:12px;font-size:6px;color:#2a2a2a;font-family:'Liberation Mono',monospace;-webkit-text-stroke:0.04px #2a2a2a;transform:translateX(-100%) ;transform-origin:0 50%;">34</div><div class="t" style="left:120.8px;top:300.7px;line-height:11.6px;font-size:5.8px;color:#222;font-family:'Liberation Mono',monospace;white-space:pre;"><span style="color:#b0406a;-webkit-text-stroke:0.06px #b0406a">&lt;div</span><span style="color:#222;-webkit-text-stroke:0.06px #222"> </span><span style="color:#2a9098;-webkit-text-stroke:0.06px #2a9098">class</span><span style="color:#222;-webkit-text-stroke:0.06px #222">=</span><span style="color:#8a3a9a;-webkit-text-stroke:0.06px #8a3a9a">&quot;columns&quot;</span><span style="color:#b0406a;-webkit-text-stroke:0.06px #b0406a">&gt;</span></div><div style="left:0px;top:315px;width:480px;height:12px;background:#f0f0f0;"></div><div style="left:2px;top:316.5px;width:28px;height:9.5px;background:#fafafa;box-shadow:inset 0 0 0 0.5px #c0c0c0;"></div><div class="t" style="left:16.0px;top:314.3px;line-height:13.0px;font-size:6.5px;color:#222;font-family:'Liberation Sans',sans-serif;transform:scaleX(0.88) translateX(-50%);transform-origin:0 50%;">1:1</div><div style="left:32px;top:316.5px;width:23px;height:9.5px;background:#fafafa;box-shadow:inset 0 0 0 0.5px #c0c0c0;"></div><div style="left:57px;top:316.5px;width:25px;height:9.5px;background:#fafafa;box-shadow:inset 0 0 0 0.5px #c0c0c0;"></div><div class="t" style="left:69.5px;top:314.3px;line-height:13.0px;font-size:6.5px;color:#222;font-family:'Liberation Sans',sans-serif;transform:scaleX(0.88) translateX(-50%);transform-origin:0 50%;">Insert</div><div style="left:84px;top:316.5px;width:396px;height:9.5px;background:#fafafa;box-shadow:inset 0 0 0 0.5px #c0c0c0;"></div><div class="t" style="left:85.5px;top:314.3px;line-height:13.0px;font-size:6.5px;color:#222;font-family:'Liberation Sans',sans-serif;transform:scaleX(0.93) ;transform-origin:0 50%;">D:\ANBSoftware\Websites\ActivMan\v2.1.1\public_html\contact.php</div><div style="left:0px;top:327px;width:480px;height:9px;background:#b9b9b9;"></div></div>
<div class="w" style="left:120px;top:123.5px;"><div style="left:480px;top:0px;width:8px;height:15px;background:#6f6f6f;"></div><div style="left:480px;top:15px;width:8px;height:25px;background:#3a3a3a;"></div><div style="left:480px;top:15px;width:1px;height:25px;background:#111;"></div><div style="left:481px;top:40px;width:7px;height:296px;background:#6e6e6e;"></div><div style="left:480px;top:40px;width:1px;height:296px;background:#a08a55;"></div><div style="left:0px;top:0px;width:480px;height:14.5px;background:#4c4b49;"></div><div class="t" style="left:15.3px;top:1.0999999999999996px;line-height:13.0px;font-size:6.5px;color:#dedede;font-family:'Liberation Sans',sans-serif;transform:scaleX(0.9048) ;transform-origin:0 50%;">HTML Writer</div><svg style="position:absolute;left:4px;top:3.5px;" width="10" height="9" viewBox="0 0 10 9"><circle cx="3.6" cy="3.6" r="2.9" fill="#5bc45b"/><circle cx="3" cy="3" r="1.3" fill="#a8e8a0"/><path d="M2.2 5.6 L5.5 2.2" stroke="#3a8ac0" stroke-width="0.7"/><path d="M4.5 7.5 L7.2 4.2" stroke="#e0a040" stroke-width="1.4"/></svg><svg style="position:absolute;left:415px;top:0px;" width="60" height="15" viewBox="0 0 60 15"><path d="M5 7.5 H10.2" stroke="#d4d4d4" stroke-width="0.9"/><rect x="27.3" y="5.2" width="5.6" height="4.6" fill="none" stroke="#d4d4d4" stroke-width="0.9"/><path d="M50 5.2 L55.4 10 M55.4 5.2 L50 10" stroke="#d4d4d4" stroke-width="0.95"/></svg><div style="left:0px;top:14.5px;width:480px;height:25.5px;background:#c4c2bd;"></div><div class="t" style="left:7.8px;top:15.0px;line-height:13.0px;font-size:6.5px;color:#1a1a1a;font-family:'Liberation Sans',sans-serif;transform:scaleX(0.8396) ;transform-origin:0 50%;">File</div><div style="left:8.1px;top:24.6px;width:3.0px;height:0.5px;background:#666;"></div><div class="t" style="left:26.2px;top:15.0px;line-height:13.0px;font-size:6.5px;color:#1a1a1a;font-family:'Liberation Sans',sans-serif;transform:scaleX(0.857) ;transform-origin:0 50%;">Edit</div><div style="left:26.5px;top:24.6px;width:3.2px;height:0.5px;background:#666;"></div><div class="t" style="left:46.5px;top:15.0px;line-height:13.0px;font-size:6.5px;color:#1a1a1a;font-family:'Liberation Sans',sans-serif;transform:scaleX(0.8587) ;transform-origin:0 50%;">View</div><div style="left:46.8px;top:24.6px;width:3.8px;height:0.5px;background:#666;"></div><div class="t" style="left:68.5px;top:15.0px;line-height:13.0px;font-size:6.5px;color:#1a1a1a;font-family:'Liberation Sans',sans-serif;transform:scaleX(0.8233) ;transform-origin:0 50%;">Tools</div><div style="left:68.8px;top:24.6px;width:3.4px;height:0.5px;background:#666;"></div><div class="t" style="left:91px;top:15.0px;line-height:13.0px;font-size:6.5px;color:#1a1a1a;font-family:'Liberation Sans',sans-serif;transform:scaleX(0.927) ;transform-origin:0 50%;">Help</div><div style="left:91.3px;top:24.6px;width:4.0px;height:0.5px;background:#666;"></div><div style="left:0px;top:14.5px;width:0.8px;height:25.5px;background:#4a4a4a;"></div><div style="left:0px;top:14.5px;width:480px;height:1.0px;background:#d8d6d2;"></div><div style="left:0px;top:38.8px;width:480px;height:1.0px;background:#dcdde2;"></div><svg style="position:absolute;left:0px;top:0px;" width="170" height="40" viewBox="0 0 170 40"><path d="M7.2 30.2 H11 L12.3 31.5 V37 H7.2 Z" fill="#fafafa" stroke="#8a8a9a" stroke-width="0.6"/><circle cx="12.3" cy="30.3" r="1.3" fill="#f5e050"/><path d="M18 31.2 H21 L21.8 32 H25 V36.7 H18 Z" fill="#c89a30"/><path d="M18.6 33.2 H26.3 L25 36.7 H18 Z" fill="#f2c84a"/><path d="M22.5 31 Q24.5 29.8 25.8 31.3" stroke="#4070b0" stroke-width="0.6" fill="none"/><rect x="30.2" y="30.2" width="6.6" height="6.6" fill="#b8b8b8"/><rect x="31.6" y="30.2" width="3.8" height="2.4" fill="#e4e4e4"/><rect x="31.4" y="34" width="4.2" height="2.8" fill="#d0d0d0"/><path d="M42 32 L45 30 H49 V34.5 L46 36.8 H42 Z" fill="#5a5ac8"/><path d="M42.5 36 L48 30.8" stroke="#d8d8f8" stroke-width="0.8"/><path d="M45 30 H49 L46 32 H42 Z" fill="#8080e0"/><rect x="52.5" y="29.5" width="0.6" height="8" fill="#b0b0b0"/><rect x="79" y="29.5" width="0.6" height="8" fill="#b0b0b0"/><rect x="115.3" y="29.5" width="0.6" height="8" fill="#b0b0b0"/><rect x="153" y="29.5" width="0.6" height="8" fill="#b0b0b0"/><path d="M57.5 31.5 Q60.5 30 62 32.5 Q62.5 35.5 59.5 36.5" stroke="#aeaca8" stroke-width="1.1" fill="none"/><path d="M56.3 30.3 L57.3 33.2 L59.5 31.5 Z" fill="#aeaca8"/><path d="M73 31.5 Q70 30 68.5 32.5 Q68 35.5 71 36.5" stroke="#aeaca8" stroke-width="1.1" fill="none"/><path d="M74.2 30.3 L73.2 33.2 L71 31.5 Z" fill="#aeaca8"/><path d="M84 30 L87 35 M87.5 30 L84.5 35" stroke="#aeaca8" stroke-width="0.8"/><circle cx="84" cy="36" r="1.1" fill="none" stroke="#aeaca8" stroke-width="0.7"/><circle cx="87.5" cy="36" r="1.1" fill="none" stroke="#aeaca8" stroke-width="0.7"/><rect x="93" y="30.2" width="4.2" height="4.6" fill="#d8d8d8" stroke="#aeaca8" stroke-width="0.5"/><rect x="95.5" y="32.3" width="4.8" height="4.8" fill="#d0d0d0" stroke="#aeaca8" stroke-width="0.5"/><rect x="104.5" y="30.8" width="6.5" height="6" fill="#b4b2ae"/><rect x="106" y="30" width="3.5" height="1.5" fill="#9a9a98"/><rect x="107.5" y="33.5" width="4.5" height="3.8" fill="#d0cec9" stroke="#a0a0a0" stroke-width="0.5"/><path d="M120.2 30.2 h1.6 l0.6 2.5 l0.8 2.6 q0 1.2 -1.6 1.2 h-1.6 q-1.2 0 -1.1 -1.2 Z" fill="#3a3a3a"/><path d="M124.6 30.2 h1.6 l0.7 2.6 l0.5 2.5 q0 1.2 -1.1 1.2 h-1.6 q-1.6 0 -1.6 -1.2 l0.8 -2.6 Z" fill="#3a3a3a"/><rect x="122.5" y="32.2" width="1.8" height="1.6" fill="#3a3a3a"/><path d="M131.2 30.2 h1.5 l0.5 2.4 l0.7 2.4 q0 1.1 -1.4 1.1 h-1.5 q-1.1 0 -1 -1.1 Z" fill="#444"/><path d="M135.2 30.2 h1.5 l0.6 2.4 l0.4 2.2 h-3.4 l0.6 -2.2 Z" fill="#444"/><rect x="133.2" y="32" width="1.6" height="1.5" fill="#444"/><path d="M133.8 35.6 H137.6 M136.4 34.3 L138 35.6 L136.4 36.9" stroke="#3a78d8" stroke-width="1.1" fill="none"/><path d="M143.5 35.5 Q143 31 147.5 30.6" stroke="#2a9a3a" stroke-width="1.5" fill="none"/><path d="M149.5 31.5 Q150 36 145.5 36.6" stroke="#2a9a3a" stroke-width="1.5" fill="none"/><path d="M146.8 29.2 L149.2 30.8 L146.8 32.4 Z" fill="#2a9a3a"/><path d="M145.8 35 L143.4 36.6 L145.8 38 Z" fill="#2a9a3a"/><path d="M142.3 36.5 L144.6 33.5" stroke="#3a3a3a" stroke-width="0.9"/><path d="M156.3 32.3 H159.3 L160 33 H163 V37 H156.3 Z" fill="#d8a830"/><path d="M156.8 34 H164.2 L163 37 H156.3 Z" fill="#f4cc58"/><circle cx="161.8" cy="31.6" r="1.9" fill="#9cc8ec" stroke="#5a90c8" stroke-width="0.4"/></svg><div style="left:0px;top:40px;width:480px;height:275px;background:#233559;"></div><div style="left:3.5px;top:43px;width:96.0px;height:10.6px;background:#4d6082;"></div><div class="t" style="left:6px;top:42.1px;line-height:13.0px;font-size:6.5px;color:#f0f0f0;font-family:'Liberation Sans',sans-serif;transform:scaleX(0.8769) ;transform-origin:0 50%;">File Explorer</div><svg style="position:absolute;left:80px;top:43px;" width="20" height="10" viewBox="0 0 20 10"><path d="M5 3 H7.6 V5.5 L8.3 6.3 H4.3 L5 5.5 Z" fill="#c8d0e0"/><path d="M6.3 6.3 V8.6" stroke="#c8d0e0" stroke-width="0.6"/><path d="M12.4 3.1 L16.6 7.4 M16.6 3.1 L12.4 7.4" stroke="#c8d0e0" stroke-width="0.75"/></svg><div style="left:3.5px;top:53.6px;width:96.0px;height:246.9px;background:#5e5d5a;"></div><div style="left:3.5px;top:65.5px;width:96.0px;height:0.8px;background:#8c8c8a;"></div><div style="left:98.9px;top:53px;width:0.6px;height:247.5px;background:#7a7a78;"></div><div style="left:3.3px;top:53.6px;width:1.3px;height:246.9px;background:#7d8aa0;"></div><svg style="position:absolute;left:0px;top:0px;" width="50" height="120" viewBox="0 0 50 120"><rect x="8.3" y="69.3" width="4.4" height="4.4" fill="#f4f4f4" stroke="#d8d8d8" stroke-width="0.5"/><path d="M9.3 71.5 H11.7" stroke="#222222" stroke-width="0.6"/><path d="M12.7 71.5 H16.5" stroke="#c8c8c8" stroke-width="0.4" stroke-dasharray="0.6 0.6"/><path d="M17.3 67.5 H20.8 L22.2 68.9 V75.3 H17.3 Z" fill="#fcfcfc" stroke="#9a9a9a" stroke-width="0.5"/><path d="M19.5 76 V111" stroke="#c8c8c8" stroke-width="0.4" stroke-dasharray="0.6 0.6"/><rect x="17.3" y="76.8" width="4.4" height="4.4" fill="#f4f4f4" stroke="#d8d8d8" stroke-width="0.5"/><path d="M18.3 79 H20.7 M19.5 77.8 V80.2" stroke="#222222" stroke-width="0.6"/><path d="M21.7 79 H25.5" stroke="#c8c8c8" stroke-width="0.4" stroke-dasharray="0.6 0.6"/><rect x="26.3" y="78" width="6.6" height="3.2" rx="0.8" fill="#5e5d5a" stroke="#f0f0f0" stroke-width="0.6"/><path d="M27 79.8 H32" stroke="#f0f0f0" stroke-width="0.6"/><path d="M26.3 75.5 L28 77.5" stroke="#40b8c8" stroke-width="1"/><rect x="17.3" y="84.8" width="4.4" height="4.4" fill="#f4f4f4" stroke="#d8d8d8" stroke-width="0.5"/><path d="M18.3 87 H20.7 M19.5 85.8 V88.2" stroke="#222222" stroke-width="0.6"/><path d="M21.7 87 H25.5" stroke="#c8c8c8" stroke-width="0.4" stroke-dasharray="0.6 0.6"/><rect x="26.3" y="86" width="6.6" height="3.2" rx="0.8" fill="#5e5d5a" stroke="#f0f0f0" stroke-width="0.6"/><path d="M27 87.8 H32" stroke="#f0f0f0" stroke-width="0.6"/><rect x="17.3" y="92.8" width="4.4" height="4.4" fill="#f4f4f4" stroke="#d8d8d8" stroke-width="0.5"/><path d="M18.3 95 H20.7 M19.5 93.8 V96.2" stroke="#222222" stroke-width="0.6"/><path d="M21.7 95 H25.5" stroke="#c8c8c8" stroke-width="0.4" stroke-dasharray="0.6 0.6"/><rect x="26.3" y="94" width="6.6" height="3.2" rx="0.8" fill="#5e5d5a" stroke="#f0f0f0" stroke-width="0.6"/><path d="M27 95.8 H32" stroke="#f0f0f0" stroke-width="0.6"/><rect x="17.3" y="100.8" width="4.4" height="4.4" fill="#f4f4f4" stroke="#d8d8d8" stroke-width="0.5"/><path d="M18.3 103 H20.7 M19.5 101.8 V104.2" stroke="#222222" stroke-width="0.6"/><path d="M21.7 103 H25.5" stroke="#c8c8c8" stroke-width="0.4" stroke-dasharray="0.6 0.6"/><rect x="26.3" y="103" width="6.6" height="2.4" fill="#5e5d5a" stroke="#f0f0f0" stroke-width="0.6"/><circle cx="30.5" cy="101.7" r="2" fill="#5e5d5a" stroke="#f0f0f0" stroke-width="0.6"/><rect x="17.3" y="108.8" width="4.4" height="4.4" fill="#f4f4f4" stroke="#d8d8d8" stroke-width="0.5"/><path d="M18.3 111 H20.7 M19.5 109.8 V112.2" stroke="#222222" stroke-width="0.6"/><path d="M21.7 111 H25.5" stroke="#c8c8c8" stroke-width="0.4" stroke-dasharray="0.6 0.6"/><rect x="26.3" y="111" width="6.6" height="2.4" fill="#5e5d5a" stroke="#f0f0f0" stroke-width="0.6"/><circle cx="30.5" cy="109.7" r="2" fill="#5e5d5a" stroke="#f0f0f0" stroke-width="0.6"/></svg><div style="left:34.5px;top:75.2px;width:10.0px;height:8.0px;background:#ffffff;box-shadow:inset 0 0 0 0.6px #333;"></div><div class="t" style="left:26px;top:64.89999999999999px;line-height:12.8px;font-size:6.4px;color:#dcdcdc;font-family:'Liberation Sans',sans-serif;transform:scaleX(0.84) ;transform-origin:0 50%;">My Computer</div><div class="t" style="left:35.7px;top:72.8px;line-height:12.8px;font-size:6.4px;color:#1a1a1a;font-family:'Liberation Sans',sans-serif;transform:scaleX(0.84) ;transform-origin:0 50%;">C:\</div><div class="t" style="left:36px;top:80.8px;line-height:12.8px;font-size:6.4px;color:#dcdcdc;font-family:'Liberation Sans',sans-serif;transform:scaleX(0.84) ;transform-origin:0 50%;">2TB DATA (D:\)</div><div class="t" style="left:36px;top:88.8px;line-height:12.8px;font-size:6.4px;color:#dcdcdc;font-family:'Liberation Sans',sans-serif;transform:scaleX(0.84) ;transform-origin:0 50%;">1TB DATA (E:\)</div><div class="t" style="left:35px;top:96.8px;line-height:12.8px;font-size:6.4px;color:#dcdcdc;font-family:'Liberation Sans',sans-serif;transform:scaleX(0.84) ;transform-origin:0 50%;">F:\</div><div class="t" style="left:35px;top:104.8px;line-height:12.8px;font-size:6.4px;color:#dcdcdc;font-family:'Liberation Sans',sans-serif;transform:scaleX(0.84) ;transform-origin:0 50%;">G:\</div><div style="left:3.5px;top:232px;width:96.0px;height:1.3px;background:#8c8c8a;"></div><div style="left:3.5px;top:233.3px;width:0.8px;height:58.7px;background:#8c8c8a;"></div><svg style="position:absolute;left:8px;top:236.4px;" width="6" height="58" viewBox="0 0 6 58"><rect x="0" y="0.0" width="6" height="7.6" fill="#f8dc84"/><rect x="5.2" y="1.0" width="0.8" height="6" fill="#e8c060"/><rect x="0" y="8.5" width="6" height="7.6" fill="#f8dc84"/><rect x="5.2" y="9.5" width="0.8" height="6" fill="#e8c060"/><rect x="0" y="17.0" width="6" height="7.6" fill="#f8dc84"/><rect x="5.2" y="18.0" width="0.8" height="6" fill="#e8c060"/><rect x="0" y="25.5" width="6" height="7.6" fill="#f8dc84"/><rect x="5.2" y="26.5" width="0.8" height="6" fill="#e8c060"/><rect x="0" y="34.0" width="6" height="7.6" fill="#f8dc84"/><rect x="5.2" y="35.0" width="0.8" height="6" fill="#e8c060"/><rect x="0" y="42.5" width="6" height="7.6" fill="#f8dc84"/><rect x="5.2" y="43.5" width="0.8" height="6" fill="#e8c060"/><rect x="0" y="51.0" width="6" height="7.6" fill="#f8dc84"/><rect x="5.2" y="52.0" width="0.8" height="6" fill="#e8c060"/></svg><div class="t" style="left:16.2px;top:235.0px;line-height:12.8px;font-size:6.4px;color:#dcdcdc;font-family:'Liberation Sans',sans-serif;transform:scaleX(0.84) ;transform-origin:0 50%;">$Recycle.Bin</div><div class="t" style="left:16.2px;top:243.5px;line-height:12.8px;font-size:6.4px;color:#dcdcdc;font-family:'Liberation Sans',sans-serif;transform:scaleX(0.84) ;transform-origin:0 50%;">$WinREAgent</div><div class="t" style="left:16.2px;top:252.00000000000003px;line-height:12.8px;font-size:6.4px;color:#dcdcdc;font-family:'Liberation Sans',sans-serif;transform:scaleX(0.84) ;transform-origin:0 50%;">ANBSoftware</div><div class="t" style="left:16.2px;top:260.50000000000006px;line-height:12.8px;font-size:6.4px;color:#dcdcdc;font-family:'Liberation Sans',sans-serif;transform:scaleX(0.84) ;transform-origin:0 50%;">Config.Msi</div><div class="t" style="left:16.2px;top:269.00000000000006px;line-height:12.8px;font-size:6.4px;color:#dcdcdc;font-family:'Liberation Sans',sans-serif;transform:scaleX(0.84) ;transform-origin:0 50%;">Documents and Settings</div><div class="t" style="left:16.2px;top:277.50000000000006px;line-height:12.8px;font-size:6.4px;color:#dcdcdc;font-family:'Liberation Sans',sans-serif;transform:scaleX(0.84) ;transform-origin:0 50%;">Intel</div><div class="t" style="left:16.2px;top:286.00000000000006px;line-height:12.8px;font-size:6.4px;color:#dcdcdc;font-family:'Liberation Sans',sans-serif;transform:scaleX(0.84) ;transform-origin:0 50%;">oldsun</div><div style="left:3.5px;top:292px;width:96.0px;height:8.5px;background:#f0f0f0;"></div><div style="left:91px;top:233.3px;width:8.5px;height:58.7px;background:#f0f0f0;"></div><div style="left:91.5px;top:244px;width:7.0px;height:9px;background:#cdcdcd;"></div><svg style="position:absolute;left:91px;top:233px;" width="9" height="67" viewBox="0 0 9 67"><path d="M2.3 8 L4.3 6 L6.3 8" stroke="#555" stroke-width="0.7" fill="none"/><path d="M2.3 54.5 L4.3 56.5 L6.3 54.5" stroke="#555" stroke-width="0.7" fill="none"/></svg><svg style="position:absolute;left:0px;top:290px;" width="100" height="12" viewBox="0 0 100 12"><path d="M8.5 4.5 L6.5 6.5 L8.5 8.5" stroke="#555" stroke-width="0.7" fill="none"/><path d="M85.5 4.5 L87.5 6.5 L85.5 8.5" stroke="#555" stroke-width="0.7" fill="none"/></svg><div style="left:14px;top:293px;width:31px;height:6.5px;background:#cdcdcd;"></div><div style="left:3.5px;top:300.5px;width:37.5px;height:10.5px;background:#ffffff;"></div><div class="t" style="left:6.3px;top:300.8px;line-height:13.0px;font-size:6.5px;color:#222;font-family:'Liberation Sans',sans-serif;transform:scaleX(0.855) ;transform-origin:0 50%;">File Explorer</div><div class="t" style="left:44.2px;top:300.8px;line-height:13.0px;font-size:6.5px;color:#ffffff;font-family:'Liberation Sans',sans-serif;transform:scaleX(0.8823) ;transform-origin:0 50%;">Project Explorer</div><div style="left:103.5px;top:43px;width:58.5px;height:10px;background:#fbee9f;"></div><div class="t" style="left:113.8px;top:42.1px;line-height:13.0px;font-size:6.5px;color:#222;font-family:'Liberation Sans',sans-serif;-webkit-text-stroke:0.04px #222;transform:scaleX(0.943) ;transform-origin:0 50%;">contact.php</div><svg style="position:absolute;left:150px;top:43px;" width="12" height="10" viewBox="0 0 12 10"><path d="M4.9 3.2 L8.9 7.2 M8.9 3.2 L4.9 7.2" stroke="#7a6a40" stroke-width="0.7"/></svg><svg style="position:absolute;left:466px;top:45px;" width="10" height="7" viewBox="0 0 10 7"><path d="M2.5 2.5 H7.5 L5 5 Z" fill="#c0d0ea"/></svg><div style="left:104px;top:52.2px;width:372px;height:1.0px;background:#e9dd9e;"></div><div style="left:104px;top:53.2px;width:362px;height:257.8px;background:#1f1f1f;"></div><div style="left:104px;top:53.2px;width:15.5px;height:257.8px;background:#545452;"></div><div style="left:104px;top:53.2px;width:0.9px;height:257.8px;background:#b8b8b8;"></div><div style="left:466px;top:53.2px;width:10px;height:257.8px;background:#f0f0f0;"></div><div style="left:466.5px;top:63px;width:9.0px;height:141px;background:#cdcdcd;"></div><svg style="position:absolute;left:466px;top:300px;" width="10" height="10" viewBox="0 0 10 10"><path d="M2.8 4 L5 6.2 L7.2 4" stroke="#555" stroke-width="0.8" fill="none"/></svg><svg style="position:absolute;left:466px;top:53px;" width="10" height="10" viewBox="0 0 10 10"><path d="M2.8 6.2 L5 4 L7.2 6.2" stroke="#555" stroke-width="0.8" fill="none"/></svg><div style="left:104px;top:309.8px;width:362px;height:1.6px;background:#d4d8e4;"></div><div class="t" style="left:118.3px;top:53.0px;line-height:12px;font-size:6px;color:#c8c8c8;font-family:'Liberation Mono',monospace;-webkit-text-stroke:0.04px #c8c8c8;transform:translateX(-100%) ;transform-origin:0 50%;">1</div><div class="t" style="left:120.8px;top:53.2px;line-height:11.6px;font-size:5.8px;color:#e6e6e6;font-family:'Liberation Mono',monospace;white-space:pre;"><span style="color:#5a9bd5;-webkit-text-stroke:0.06px #5a9bd5">&lt;?php</span></div><div class="t" style="left:118.3px;top:60.5px;line-height:12px;font-size:6px;color:#c8c8c8;font-family:'Liberation Mono',monospace;-webkit-text-stroke:0.04px #c8c8c8;transform:translateX(-100%) ;transform-origin:0 50%;">2</div><div class="t" style="left:120.8px;top:60.7px;line-height:11.6px;font-size:5.8px;color:#e6e6e6;font-family:'Liberation Mono',monospace;white-space:pre;"><span style="color:#5a9bd5;-webkit-text-stroke:0.06px #5a9bd5">global</span><span style="color:#e6e6e6;-webkit-text-stroke:0.06px #e6e6e6"> </span><span style="color:#56c2a6;-webkit-text-stroke:0.06px #56c2a6">$title</span><span style="color:#e6e6e6;-webkit-text-stroke:0.06px #e6e6e6">, </span><span style="color:#56c2a6;-webkit-text-stroke:0.06px #56c2a6">$description</span><span style="color:#e6e6e6;-webkit-text-stroke:0.06px #e6e6e6">;</span></div><div class="t" style="left:118.3px;top:68.0px;line-height:12px;font-size:6px;color:#c8c8c8;font-family:'Liberation Mono',monospace;-webkit-text-stroke:0.04px #c8c8c8;transform:translateX(-100%) ;transform-origin:0 50%;">3</div><div class="t" style="left:120.8px;top:68.2px;line-height:11.6px;font-size:5.8px;color:#e6e6e6;font-family:'Liberation Mono',monospace;white-space:pre;"><span style="color:#56c2a6;-webkit-text-stroke:0.06px #56c2a6">$title</span><span style="color:#e6e6e6;-webkit-text-stroke:0.06px #e6e6e6"> = </span><span style="color:#4f9a4f;-webkit-text-stroke:0.06px #4f9a4f">&quot;ActivMan - Contact&quot;</span><span style="color:#e6e6e6;-webkit-text-stroke:0.06px #e6e6e6">;</span></div><div class="t" style="left:118.3px;top:75.5px;line-height:12px;font-size:6px;color:#c8c8c8;font-family:'Liberation Mono',monospace;-webkit-text-stroke:0.04px #c8c8c8;transform:translateX(-100%) ;transform-origin:0 50%;">4</div><div class="t" style="left:120.8px;top:75.7px;line-height:11.6px;font-size:5.8px;color:#e6e6e6;font-family:'Liberation Mono',monospace;white-space:pre;"><span style="color:#56c2a6;-webkit-text-stroke:0.06px #56c2a6">$description</span><span style="color:#e6e6e6;-webkit-text-stroke:0.06px #e6e6e6"> = </span><span style="color:#4f9a4f;-webkit-text-stroke:0.06px #4f9a4f">&quot;Contact ANB Software&quot;</span><span style="color:#e6e6e6;-webkit-text-stroke:0.06px #e6e6e6">;</span></div><div class="t" style="left:118.3px;top:83.0px;line-height:12px;font-size:6px;color:#c8c8c8;font-family:'Liberation Mono',monospace;-webkit-text-stroke:0.04px #c8c8c8;transform:translateX(-100%) ;transform-origin:0 50%;">5</div><div class="t" style="left:120.8px;top:83.2px;line-height:11.6px;font-size:5.8px;color:#e6e6e6;font-family:'Liberation Mono',monospace;white-space:pre;"></div><div class="t" style="left:118.3px;top:90.5px;line-height:12px;font-size:6px;color:#c8c8c8;font-family:'Liberation Mono',monospace;-webkit-text-stroke:0.04px #c8c8c8;transform:translateX(-100%) ;transform-origin:0 50%;">6</div><div class="t" style="left:120.8px;top:90.7px;line-height:11.6px;font-size:5.8px;color:#e6e6e6;font-family:'Liberation Mono',monospace;white-space:pre;"><span style="color:#5a9bd5;-webkit-text-stroke:0.06px #5a9bd5">include_once</span><span style="color:#e6e6e6;-webkit-text-stroke:0.06px #e6e6e6">(</span><span style="color:#4f9a4f;-webkit-text-stroke:0.06px #4f9a4f">&quot;../include/header.php&quot;</span><span style="color:#e6e6e6;-webkit-text-stroke:0.06px #e6e6e6">);</span></div><div class="t" style="left:118.3px;top:98.0px;line-height:12px;font-size:6px;color:#c8c8c8;font-family:'Liberation Mono',monospace;-webkit-text-stroke:0.04px #c8c8c8;transform:translateX(-100%) ;transform-origin:0 50%;">7</div><div class="t" style="left:120.8px;top:98.2px;line-height:11.6px;font-size:5.8px;color:#e6e6e6;font-family:'Liberation Mono',monospace;white-space:pre;"><span style="color:#5a9bd5;-webkit-text-stroke:0.06px #5a9bd5">?&gt;</span></div><div class="t" style="left:118.3px;top:105.5px;line-height:12px;font-size:6px;color:#c8c8c8;font-family:'Liberation Mono',monospace;-webkit-text-stroke:0.04px #c8c8c8;transform:translateX(-100%) ;transform-origin:0 50%;">8</div><div class="t" style="left:120.8px;top:105.7px;line-height:11.6px;font-size:5.8px;color:#e6e6e6;font-family:'Liberation Mono',monospace;white-space:pre;"></div><div class="t" style="left:118.3px;top:113.0px;line-height:12px;font-size:6px;color:#c8c8c8;font-family:'Liberation Mono',monospace;-webkit-text-stroke:0.04px #c8c8c8;transform:translateX(-100%) ;transform-origin:0 50%;">9</div><div class="t" style="left:120.8px;top:113.2px;line-height:11.6px;font-size:5.8px;color:#e6e6e6;font-family:'Liberation Mono',monospace;white-space:pre;"><span style="color:#5a9bd5;-webkit-text-stroke:0.06px #5a9bd5">&lt;div</span><span style="color:#e6e6e6;-webkit-text-stroke:0.06px #e6e6e6"> </span><span style="color:#cc4c4c;-webkit-text-stroke:0.06px #cc4c4c">class</span><span style="color:#e6e6e6;-webkit-text-stroke:0.06px #e6e6e6">=</span><span style="color:#3fa596;-webkit-text-stroke:0.06px #3fa596">&quot;section&quot;</span><span style="color:#5a9bd5;-webkit-text-stroke:0.06px #5a9bd5">&gt;</span></div><div class="t" style="left:118.3px;top:120.5px;line-height:12px;font-size:6px;color:#c8c8c8;font-family:'Liberation Mono',monospace;-webkit-text-stroke:0.04px #c8c8c8;transform:translateX(-100%) ;transform-origin:0 50%;">10</div><div class="t" style="left:120.8px;top:120.7px;line-height:11.6px;font-size:5.8px;color:#e6e6e6;font-family:'Liberation Mono',monospace;white-space:pre;"></div><div class="t" style="left:118.3px;top:128.0px;line-height:12px;font-size:6px;color:#c8c8c8;font-family:'Liberation Mono',monospace;-webkit-text-stroke:0.04px #c8c8c8;transform:translateX(-100%) ;transform-origin:0 50%;">11</div><div class="t" style="left:120.8px;top:128.2px;line-height:11.6px;font-size:5.8px;color:#e6e6e6;font-family:'Liberation Mono',monospace;white-space:pre;"><span style="color:#5a9bd5;-webkit-text-stroke:0.06px #5a9bd5">&lt;div</span><span style="color:#e6e6e6;-webkit-text-stroke:0.06px #e6e6e6"> </span><span style="color:#cc4c4c;-webkit-text-stroke:0.06px #cc4c4c">class</span><span style="color:#e6e6e6;-webkit-text-stroke:0.06px #e6e6e6">=</span><span style="color:#3fa596;-webkit-text-stroke:0.06px #3fa596">&quot;content&quot;</span><span style="color:#5a9bd5;-webkit-text-stroke:0.06px #5a9bd5">&gt;</span></div><div class="t" style="left:118.3px;top:135.5px;line-height:12px;font-size:6px;color:#c8c8c8;font-family:'Liberation Mono',monospace;-webkit-text-stroke:0.04px #c8c8c8;transform:translateX(-100%) ;transform-origin:0 50%;">12</div><div class="t" style="left:120.8px;top:135.7px;line-height:11.6px;font-size:5.8px;color:#e6e6e6;font-family:'Liberation Mono',monospace;white-space:pre;"></div><div class="t" style="left:118.3px;top:143.0px;line-height:12px;font-size:6px;color:#c8c8c8;font-family:'Liberation Mono',monospace;-webkit-text-stroke:0.04px #c8c8c8;transform:translateX(-100%) ;transform-origin:0 50%;">13</div><div class="t" style="left:120.8px;top:143.2px;line-height:11.6px;font-size:5.8px;color:#e6e6e6;font-family:'Liberation Mono',monospace;white-space:pre;"><span style="color:#5a9bd5;-webkit-text-stroke:0.06px #5a9bd5">&lt;div</span><span style="color:#e6e6e6;-webkit-text-stroke:0.06px #e6e6e6"> </span><span style="color:#cc4c4c;-webkit-text-stroke:0.06px #cc4c4c">class</span><span style="color:#e6e6e6;-webkit-text-stroke:0.06px #e6e6e6"> = </span><span style="color:#3fa596;-webkit-text-stroke:0.06px #3fa596">&quot;container&quot;</span><span style="color:#5a9bd5;-webkit-text-stroke:0.06px #5a9bd5">&gt;</span></div><div class="t" style="left:118.3px;top:150.5px;line-height:12px;font-size:6px;color:#c8c8c8;font-family:'Liberation Mono',monospace;-webkit-text-stroke:0.04px #c8c8c8;transform:translateX(-100%) ;transform-origin:0 50%;">14</div><div class="t" style="left:120.8px;top:150.7px;line-height:11.6px;font-size:5.8px;color:#e6e6e6;font-family:'Liberation Mono',monospace;white-space:pre;"></div><div class="t" style="left:118.3px;top:158.0px;line-height:12px;font-size:6px;color:#c8c8c8;font-family:'Liberation Mono',monospace;-webkit-text-stroke:0.04px #c8c8c8;transform:translateX(-100%) ;transform-origin:0 50%;">15</div><div class="t" style="left:120.8px;top:158.2px;line-height:11.6px;font-size:5.8px;color:#e6e6e6;font-family:'Liberation Mono',monospace;white-space:pre;"><span style="color:#5a9bd5;-webkit-text-stroke:0.06px #5a9bd5">&lt;h1&gt;</span><span style="color:#e6e6e6;-webkit-text-stroke:0.06px #e6e6e6">Contact</span><span style="color:#5a9bd5;-webkit-text-stroke:0.06px #5a9bd5">&lt;/h1&gt;</span></div><div class="t" style="left:118.3px;top:165.5px;line-height:12px;font-size:6px;color:#c8c8c8;font-family:'Liberation Mono',monospace;-webkit-text-stroke:0.04px #c8c8c8;transform:translateX(-100%) ;transform-origin:0 50%;">16</div><div class="t" style="left:120.8px;top:165.7px;line-height:11.6px;font-size:5.8px;color:#e6e6e6;font-family:'Liberation Mono',monospace;white-space:pre;"></div><div class="t" style="left:118.3px;top:173.0px;line-height:12px;font-size:6px;color:#c8c8c8;font-family:'Liberation Mono',monospace;-webkit-text-stroke:0.04px #c8c8c8;transform:translateX(-100%) ;transform-origin:0 50%;">17</div><div class="t" style="left:120.8px;top:173.2px;line-height:11.6px;font-size:5.8px;color:#e6e6e6;font-family:'Liberation Mono',monospace;white-space:pre;"><span style="color:#5a9bd5;-webkit-text-stroke:0.06px #5a9bd5">&lt;p</span><span style="color:#e6e6e6;-webkit-text-stroke:0.06px #e6e6e6"> </span><span style="color:#cc4c4c;-webkit-text-stroke:0.06px #cc4c4c">class</span><span style="color:#e6e6e6;-webkit-text-stroke:0.06px #e6e6e6">=</span><span style="color:#3fa596;-webkit-text-stroke:0.06px #3fa596">&quot;title is-4&quot;</span><span style="color:#5a9bd5;-webkit-text-stroke:0.06px #5a9bd5">&gt;</span><span style="color:#e6e6e6;-webkit-text-stroke:0.06px #e6e6e6">Address</span><span style="color:#5a9bd5;-webkit-text-stroke:0.06px #5a9bd5">&lt;/p&gt;</span></div><div class="t" style="left:118.3px;top:180.5px;line-height:12px;font-size:6px;color:#c8c8c8;font-family:'Liberation Mono',monospace;-webkit-text-stroke:0.04px #c8c8c8;transform:translateX(-100%) ;transform-origin:0 50%;">18</div><div class="t" style="left:120.8px;top:180.7px;line-height:11.6px;font-size:5.8px;color:#e6e6e6;font-family:'Liberation Mono',monospace;white-space:pre;"></div><div class="t" style="left:118.3px;top:188.0px;line-height:12px;font-size:6px;color:#c8c8c8;font-family:'Liberation Mono',monospace;-webkit-text-stroke:0.04px #c8c8c8;transform:translateX(-100%) ;transform-origin:0 50%;">19</div><div class="t" style="left:120.8px;top:188.2px;line-height:11.6px;font-size:5.8px;color:#e6e6e6;font-family:'Liberation Mono',monospace;white-space:pre;"><span style="color:#5a9bd5;-webkit-text-stroke:0.06px #5a9bd5">&lt;div</span><span style="color:#e6e6e6;-webkit-text-stroke:0.06px #e6e6e6"> </span><span style="color:#cc4c4c;-webkit-text-stroke:0.06px #cc4c4c">class</span><span style="color:#e6e6e6;-webkit-text-stroke:0.06px #e6e6e6">=</span><span style="color:#3fa596;-webkit-text-stroke:0.06px #3fa596">&quot;columns&quot;</span><span style="color:#5a9bd5;-webkit-text-stroke:0.06px #5a9bd5">&gt;</span></div><div class="t" style="left:118.3px;top:195.5px;line-height:12px;font-size:6px;color:#c8c8c8;font-family:'Liberation Mono',monospace;-webkit-text-stroke:0.04px #c8c8c8;transform:translateX(-100%) ;transform-origin:0 50%;">20</div><div class="t" style="left:120.8px;top:195.7px;line-height:11.6px;font-size:5.8px;color:#e6e6e6;font-family:'Liberation Mono',monospace;white-space:pre;"><span style="color:#5a9bd5;-webkit-text-stroke:0.06px #5a9bd5">&lt;div</span><span style="color:#e6e6e6;-webkit-text-stroke:0.06px #e6e6e6"> </span><span style="color:#cc4c4c;-webkit-text-stroke:0.06px #cc4c4c">class</span><span style="color:#e6e6e6;-webkit-text-stroke:0.06px #e6e6e6">=</span><span style="color:#3fa596;-webkit-text-stroke:0.06px #3fa596">&quot;column is-11 is-offset-1&quot;</span><span style="color:#5a9bd5;-webkit-text-stroke:0.06px #5a9bd5">&gt;</span></div><div class="t" style="left:118.3px;top:203.0px;line-height:12px;font-size:6px;color:#c8c8c8;font-family:'Liberation Mono',monospace;-webkit-text-stroke:0.04px #c8c8c8;transform:translateX(-100%) ;transform-origin:0 50%;">21</div><div class="t" style="left:120.8px;top:203.2px;line-height:11.6px;font-size:5.8px;color:#e6e6e6;font-family:'Liberation Mono',monospace;white-space:pre;"><span style="color:#5a9bd5;-webkit-text-stroke:0.06px #5a9bd5">&lt;p&gt;</span></div><div class="t" style="left:118.3px;top:210.5px;line-height:12px;font-size:6px;color:#c8c8c8;font-family:'Liberation Mono',monospace;-webkit-text-stroke:0.04px #c8c8c8;transform:translateX(-100%) ;transform-origin:0 50%;">22</div><div class="t" style="left:120.8px;top:210.7px;line-height:11.6px;font-size:5.8px;color:#e6e6e6;font-family:'Liberation Mono',monospace;white-space:pre;"><span style="color:#e6e6e6;-webkit-text-stroke:0.06px #e6e6e6">ANB Software Ltd</span><span style="color:#5a9bd5;-webkit-text-stroke:0.06px #5a9bd5">&lt;br /&gt;</span></div><div class="t" style="left:118.3px;top:218.0px;line-height:12px;font-size:6px;color:#c8c8c8;font-family:'Liberation Mono',monospace;-webkit-text-stroke:0.04px #c8c8c8;transform:translateX(-100%) ;transform-origin:0 50%;">23</div><div class="t" style="left:120.8px;top:218.2px;line-height:11.6px;font-size:5.8px;color:#e6e6e6;font-family:'Liberation Mono',monospace;white-space:pre;"><span style="color:#e6e6e6;-webkit-text-stroke:0.06px #e6e6e6">15 Broom Lane</span><span style="color:#5a9bd5;-webkit-text-stroke:0.06px #5a9bd5">&lt;br /&gt;</span></div><div class="t" style="left:118.3px;top:225.5px;line-height:12px;font-size:6px;color:#c8c8c8;font-family:'Liberation Mono',monospace;-webkit-text-stroke:0.04px #c8c8c8;transform:translateX(-100%) ;transform-origin:0 50%;">24</div><div class="t" style="left:120.8px;top:225.7px;line-height:11.6px;font-size:5.8px;color:#e6e6e6;font-family:'Liberation Mono',monospace;white-space:pre;"><span style="color:#e6e6e6;-webkit-text-stroke:0.06px #e6e6e6">Rotherham</span><span style="color:#5a9bd5;-webkit-text-stroke:0.06px #5a9bd5">&lt;br /&gt;</span></div><div class="t" style="left:118.3px;top:233.0px;line-height:12px;font-size:6px;color:#c8c8c8;font-family:'Liberation Mono',monospace;-webkit-text-stroke:0.04px #c8c8c8;transform:translateX(-100%) ;transform-origin:0 50%;">25</div><div class="t" style="left:120.8px;top:233.2px;line-height:11.6px;font-size:5.8px;color:#e6e6e6;font-family:'Liberation Mono',monospace;white-space:pre;"><span style="color:#e6e6e6;-webkit-text-stroke:0.06px #e6e6e6">South Yorkshire</span><span style="color:#5a9bd5;-webkit-text-stroke:0.06px #5a9bd5">&lt;br /&gt;</span></div><div class="t" style="left:118.3px;top:240.5px;line-height:12px;font-size:6px;color:#c8c8c8;font-family:'Liberation Mono',monospace;-webkit-text-stroke:0.04px #c8c8c8;transform:translateX(-100%) ;transform-origin:0 50%;">26</div><div class="t" style="left:120.8px;top:240.7px;line-height:11.6px;font-size:5.8px;color:#e6e6e6;font-family:'Liberation Mono',monospace;white-space:pre;"><span style="color:#e6e6e6;-webkit-text-stroke:0.06px #e6e6e6">UK</span><span style="color:#5a9bd5;-webkit-text-stroke:0.06px #5a9bd5">&lt;br /&gt;</span></div><div class="t" style="left:118.3px;top:248.0px;line-height:12px;font-size:6px;color:#c8c8c8;font-family:'Liberation Mono',monospace;-webkit-text-stroke:0.04px #c8c8c8;transform:translateX(-100%) ;transform-origin:0 50%;">27</div><div class="t" style="left:120.8px;top:248.2px;line-height:11.6px;font-size:5.8px;color:#e6e6e6;font-family:'Liberation Mono',monospace;white-space:pre;"><span style="color:#e6e6e6;-webkit-text-stroke:0.06px #e6e6e6">S60 3EL</span><span style="color:#5a9bd5;-webkit-text-stroke:0.06px #5a9bd5">&lt;br /&gt;</span></div><div class="t" style="left:118.3px;top:255.5px;line-height:12px;font-size:6px;color:#c8c8c8;font-family:'Liberation Mono',monospace;-webkit-text-stroke:0.04px #c8c8c8;transform:translateX(-100%) ;transform-origin:0 50%;">28</div><div class="t" style="left:120.8px;top:255.7px;line-height:11.6px;font-size:5.8px;color:#e6e6e6;font-family:'Liberation Mono',monospace;white-space:pre;"><span style="color:#5a9bd5;-webkit-text-stroke:0.06px #5a9bd5">&lt;/p&gt;</span></div><div class="t" style="left:118.3px;top:263.0px;line-height:12px;font-size:6px;color:#c8c8c8;font-family:'Liberation Mono',monospace;-webkit-text-stroke:0.04px #c8c8c8;transform:translateX(-100%) ;transform-origin:0 50%;">29</div><div class="t" style="left:120.8px;top:263.2px;line-height:11.6px;font-size:5.8px;color:#e6e6e6;font-family:'Liberation Mono',monospace;white-space:pre;"><span style="color:#5a9bd5;-webkit-text-stroke:0.06px #5a9bd5">&lt;/div&gt;</span></div><div class="t" style="left:118.3px;top:270.5px;line-height:12px;font-size:6px;color:#c8c8c8;font-family:'Liberation Mono',monospace;-webkit-text-stroke:0.04px #c8c8c8;transform:translateX(-100%) ;transform-origin:0 50%;">30</div><div class="t" style="left:120.8px;top:270.7px;line-height:11.6px;font-size:5.8px;color:#e6e6e6;font-family:'Liberation Mono',monospace;white-space:pre;"><span style="color:#5a9bd5;-webkit-text-stroke:0.06px #5a9bd5">&lt;/div&gt;</span></div><div class="t" style="left:118.3px;top:278.0px;line-height:12px;font-size:6px;color:#c8c8c8;font-family:'Liberation Mono',monospace;-webkit-text-stroke:0.04px #c8c8c8;transform:translateX(-100%) ;transform-origin:0 50%;">31</div><div class="t" style="left:120.8px;top:278.2px;line-height:11.6px;font-size:5.8px;color:#e6e6e6;font-family:'Liberation Mono',monospace;white-space:pre;"></div><div class="t" style="left:118.3px;top:285.5px;line-height:12px;font-size:6px;color:#c8c8c8;font-family:'Liberation Mono',monospace;-webkit-text-stroke:0.04px #c8c8c8;transform:translateX(-100%) ;transform-origin:0 50%;">32</div><div class="t" style="left:120.8px;top:285.7px;line-height:11.6px;font-size:5.8px;color:#e6e6e6;font-family:'Liberation Mono',monospace;white-space:pre;"><span style="color:#5a9bd5;-webkit-text-stroke:0.06px #5a9bd5">&lt;p</span><span style="color:#e6e6e6;-webkit-text-stroke:0.06px #e6e6e6"> </span><span style="color:#cc4c4c;-webkit-text-stroke:0.06px #cc4c4c">class</span><span style="color:#e6e6e6;-webkit-text-stroke:0.06px #e6e6e6">=</span><span style="color:#3fa596;-webkit-text-stroke:0.06px #3fa596">&quot;title is-4&quot;</span><span style="color:#5a9bd5;-webkit-text-stroke:0.06px #5a9bd5">&gt;</span><span style="color:#e6e6e6;-webkit-text-stroke:0.06px #e6e6e6">Email</span><span style="color:#5a9bd5;-webkit-text-stroke:0.06px #5a9bd5">&lt;/p&gt;</span></div><div class="t" style="left:118.3px;top:293.0px;line-height:12px;font-size:6px;color:#c8c8c8;font-family:'Liberation Mono',monospace;-webkit-text-stroke:0.04px #c8c8c8;transform:translateX(-100%) ;transform-origin:0 50%;">33</div><div class="t" style="left:120.8px;top:293.2px;line-height:11.6px;font-size:5.8px;color:#e6e6e6;font-family:'Liberation Mono',monospace;white-space:pre;"></div><div class="t" style="left:118.3px;top:300.5px;line-height:12px;font-size:6px;color:#c8c8c8;font-family:'Liberation Mono',monospace;-webkit-text-stroke:0.04px #c8c8c8;transform:translateX(-100%) ;transform-origin:0 50%;">34</div><div class="t" style="left:120.8px;top:300.7px;line-height:11.6px;font-size:5.8px;color:#e6e6e6;font-family:'Liberation Mono',monospace;white-space:pre;"><span style="color:#5a9bd5;-webkit-text-stroke:0.06px #5a9bd5">&lt;div</span><span style="color:#e6e6e6;-webkit-text-stroke:0.06px #e6e6e6"> </span><span style="color:#cc4c4c;-webkit-text-stroke:0.06px #cc4c4c">class</span><span style="color:#e6e6e6;-webkit-text-stroke:0.06px #e6e6e6">=</span><span style="color:#3fa596;-webkit-text-stroke:0.06px #3fa596">&quot;columns&quot;</span><span style="color:#5a9bd5;-webkit-text-stroke:0.06px #5a9bd5">&gt;</span></div><div style="left:0px;top:315px;width:480px;height:12px;background:#c6c6c4;"></div><div style="left:2px;top:316.5px;width:28px;height:9.5px;background:#c2bfba;box-shadow:inset 0 0 0 0.5px #a8a8a8;"></div><div class="t" style="left:16.0px;top:314.3px;line-height:13.0px;font-size:6.5px;color:#222;font-family:'Liberation Sans',sans-serif;transform:scaleX(0.88) translateX(-50%);transform-origin:0 50%;">1:1</div><div style="left:32px;top:316.5px;width:23px;height:9.5px;background:#c2bfba;box-shadow:inset 0 0 0 0.5px #a8a8a8;"></div><div style="left:57px;top:316.5px;width:25px;height:9.5px;background:#c2bfba;box-shadow:inset 0 0 0 0.5px #a8a8a8;"></div><div class="t" style="left:69.5px;top:314.3px;line-height:13.0px;font-size:6.5px;color:#222;font-family:'Liberation Sans',sans-serif;transform:scaleX(0.88) translateX(-50%);transform-origin:0 50%;">Insert</div><div style="left:84px;top:316.5px;width:396px;height:9.5px;background:#c2bfba;box-shadow:inset 0 0 0 0.5px #a8a8a8;"></div><div class="t" style="left:85.5px;top:314.3px;line-height:13.0px;font-size:6.5px;color:#222;font-family:'Liberation Sans',sans-serif;transform:scaleX(0.93) ;transform-origin:0 50%;">D:\ANBSoftware\Websites\ActivMan\v2.1.1\public_html\contact.php</div><div style="left:0px;top:327px;width:480px;height:9px;background:#b9b9b9;"></div></div>
<div style="position:absolute;left:481px;top:120px;width:119px;height:4px;background:#4c4b49"></div>
<div style="position:absolute;left:112px;top:327px;width:8px;height:123px;overflow:hidden"><div style="position:absolute;left:0px;top:0px;width:5.5px;height:123px;background:#8e8e8e;"></div><div style="position:absolute;left:0px;top:0px;width:5.5px;height:8px;background:#7a7a7a;"></div><div style="position:absolute;left:0px;top:8px;width:5.5px;height:8px;background:#a8a8a8;"></div><div style="position:absolute;left:0px;top:32px;width:5.5px;height:8px;background:#a8a8a8;"></div><div style="position:absolute;left:0px;top:56px;width:5.5px;height:8px;background:#a8a8a8;"></div><div style="position:absolute;left:0px;top:80px;width:5.5px;height:8px;background:#a8a8a8;"></div><div style="position:absolute;left:0px;top:104px;width:5.5px;height:8px;background:#a8a8a8;"></div><div style="position:absolute;left:5.5px;top:0px;width:2.5px;height:110px;background:#6a5a30;"></div><div style="position:absolute;left:5.6px;top:4px;width:2.2px;height:7px;background:#e6c040;"></div><div style="position:absolute;left:5.6px;top:16px;width:2.2px;height:7px;background:#e6c040;"></div><div style="position:absolute;left:5.6px;top:28px;width:2.2px;height:7px;background:#e6c040;"></div><div style="position:absolute;left:5.6px;top:40px;width:2.2px;height:7px;background:#e6c040;"></div><div style="position:absolute;left:5.6px;top:52px;width:2.2px;height:7px;background:#e6c040;"></div><div style="position:absolute;left:5.6px;top:64px;width:2.2px;height:7px;background:#e6c040;"></div><div style="position:absolute;left:5.6px;top:76px;width:2.2px;height:7px;background:#e6c040;"></div><div style="position:absolute;left:5.6px;top:88px;width:2.2px;height:7px;background:#e6c040;"></div><div style="position:absolute;left:5.6px;top:100px;width:2.2px;height:7px;background:#e6c040;"></div><div style="position:absolute;left:0px;top:103px;width:8px;height:20px;background:#1a1a1a;"></div></div>
</body></html>
